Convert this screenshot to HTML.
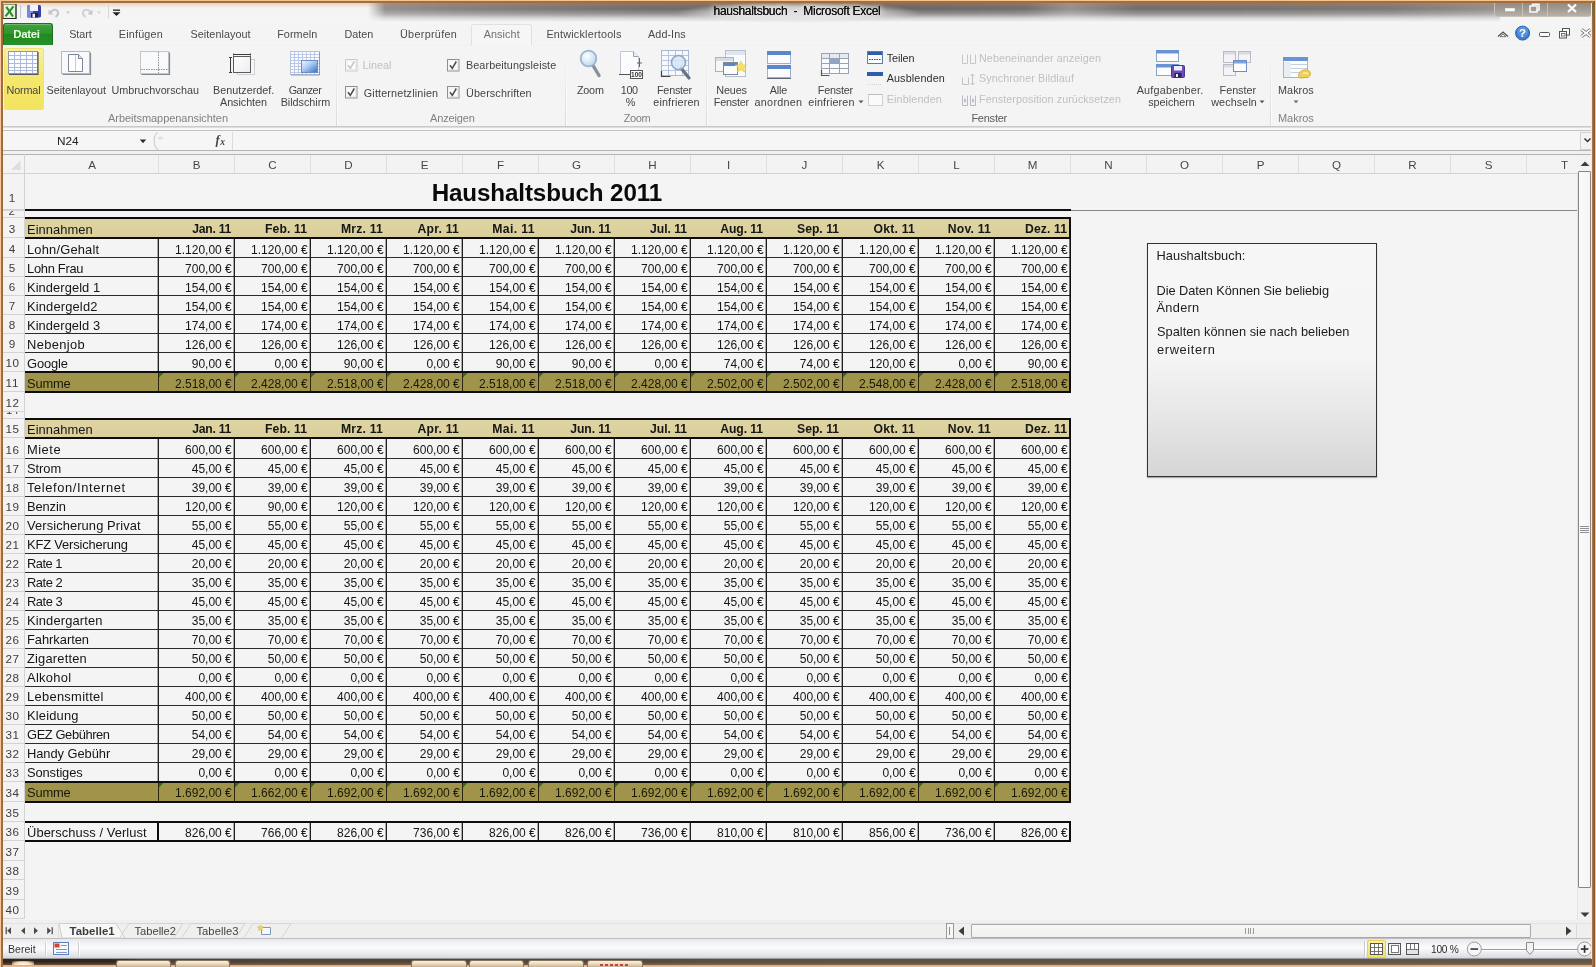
<!DOCTYPE html>
<html lang="de"><head><meta charset="utf-8"><title>haushaltsbuch - Microsoft Excel</title>
<style>
html,body{margin:0;padding:0}
body{width:1596px;height:967px;position:relative;overflow:hidden;background:#f4f4f4;font-family:"Liberation Sans",sans-serif;}
#app{left:0;top:0;width:1596px;height:967px;overflow:hidden;will-change:transform;transform:translateZ(0)}
div,span,svg{position:absolute;box-sizing:border-box}
span{white-space:pre;display:block}
</style></head>
<body>
<div id="app">
<div style="left:0px;top:0px;width:1596px;height:24px;background:linear-gradient(#f3f3f3,#f5f5f5)"></div>
<div style="left:368px;top:2px;width:1132px;height:20px;background:linear-gradient(to right,rgba(120,118,116,0) 0,rgba(135,133,131,.9) 1.500%,rgba(122,120,118,.92) 8%,rgba(100,98,96,.92) 25%,rgba(92,90,88,.92) 45%,rgba(98,96,94,.9) 58%,rgba(125,122,120,.8) 62%,rgba(98,96,94,.9) 68%,rgba(105,103,101,.88) 90%,rgba(125,121,117,.8) 100%);-webkit-mask-image:linear-gradient(#000 0,#000 35%,rgba(0,0,0,.7) 60%,rgba(0,0,0,.25) 80%,transparent 100%);mask-image:linear-gradient(#000 0,#000 35%,rgba(0,0,0,.7) 60%,rgba(0,0,0,.25) 80%,transparent 100%)"></div>
<div style="left:0px;top:2px;width:1596px;height:6px;background:linear-gradient(rgba(200,140,90,.35),rgba(200,140,90,0))"></div>
<div style="left:1494px;top:2px;width:98px;height:15px;background:linear-gradient(#8f8983,#a39c94 55%,#b9b1a8);border:1px solid #c9c2ba;border-top:0;border-radius:0 0 4px 4px"></div>
<div style="left:1522px;top:3px;width:1px;height:13px;background:#cfc8c0;opacity:.8"></div>
<div style="left:1547px;top:3px;width:1px;height:13px;background:#cfc8c0;opacity:.8"></div>
<svg style="left:1494px;top:2px" width="98" height="15" viewBox="0 0 98 15"><g fill="none" stroke="#fbfbfb" stroke-width="1.500"><rect x="11.500" y="6.500" width="9" height="2.500" fill="#fbfbfb" stroke-width=".6"/><rect x="36" y="4" width="7" height="6"/><path d="M38.500 4V2.200h6.500V8h-2"/><path d="M74 2.500l8 7.500M82 2.500l-8 7.500" stroke-width="2.300"/></g></svg>
<div style="left:676px;top:2px;width:244px;height:22px;background:radial-gradient(closest-side,rgba(235,235,235,.9) 0,rgba(232,232,232,.8) 55%,rgba(228,228,228,0) 100%)"></div>
<span style="left:713.50px;top:2.84px;font-size:12px;line-height:16px;color:#111;letter-spacing:-0.275px;text-shadow:0 0 .6px #111,0 0 6px #eee,0 0 6px #eee;">haushaltsbuch  -  Microsoft Excel</span>
<svg style="left:3px;top:4px" width="125" height="16" viewBox="0 0 125 16">
<rect x="0.500" y="0.500" width="12.500" height="14" fill="#e6f2dc" stroke="#8a9a80" stroke-width="1"/>
<path d="M13 0v14.500H0" fill="none" stroke="#2c2c2c" stroke-width="1.200"/>
<path d="M2.500 12.300L10.500 2.300M3.300 2.800l6.700 9.700" stroke="#2e8b2e" stroke-width="2.100" fill="none"/>
<rect x="17" y="1" width="1" height="13" fill="#b9c6cf"/>
<rect x="24" y="1" width="14" height="12.500" rx="1.500" fill="#3a3f9e"/>
<rect x="24" y="1" width="6" height="12.500" rx="1.500" fill="#8f98e6" opacity=".8"/>
<rect x="27" y="1" width="8" height="6" fill="#eef3ff"/>
<rect x="28" y="9" width="7" height="4.500" fill="#1d1f5e"/>
<rect x="29.500" y="9.800" width="2.500" height="3.700" fill="#f2f2f2"/>
<path d="M47 9.500c1.500-4.500 7-5 8-1.500c.6 2.500-.8 4-2.500 5" fill="none" stroke="#c6c6ca" stroke-width="2"/>
<path d="M45.500 5.500v5h5z" fill="#c6c6ca"/>
<path d="M63 7.500h4l-2 2.500z" fill="#c9c9cc"/>
<path d="M88 9.500c-1.500-4.500-7-5-8-1.500c-.6 2.500.8 4 2.500 5" fill="none" stroke="#d2d2d6" stroke-width="2"/>
<path d="M89.500 5.500v5h-5z" fill="#c6c6ca"/>
<path d="M94 7.500h4l-2 2.500z" fill="#d5d5d8"/>
<rect x="105" y="1" width="1" height="13" fill="#d7d7d7"/>
<rect x="110" y="5.500" width="7" height="1.300" fill="#222"/>
<path d="M109.500 8.200h8l-4 3.800z" fill="#222"/>
</svg>
<div style="left:3px;top:23px;width:50px;height:22px;background:linear-gradient(#3fa23f 0,#2c952c 45%,#1f8a1f 50%,#279027 100%);border:1px solid #1f701f;border-bottom:0;border-radius:3px 3px 0 0;box-shadow:inset 0 1px 0 rgba(255,255,255,.25)"></div>
<span style="left:13.20px;top:26.02px;font-size:11.5px;line-height:16px;font-weight:bold;color:#e8ffe0;letter-spacing:-0.324px;">Datei</span>
<div style="left:471px;top:24px;width:61px;height:22px;background:#f6f6f6;border:1px solid #e1e1e1;border-bottom:0;border-radius:3px 3px 0 0"></div>
<span style="left:69.20px;top:26.56px;font-size:10.8px;line-height:15px;color:#4a4a4a;letter-spacing:-0.062px;">Start</span>
<span style="left:118.80px;top:26.56px;font-size:10.8px;line-height:15px;color:#4a4a4a;letter-spacing:0.183px;">Einfügen</span>
<span style="left:190.50px;top:26.56px;font-size:10.8px;line-height:15px;color:#4a4a4a;letter-spacing:0.055px;">Seitenlayout</span>
<span style="left:277.20px;top:26.56px;font-size:10.8px;line-height:15px;color:#4a4a4a;letter-spacing:0.070px;">Formeln</span>
<span style="left:344.40px;top:26.56px;font-size:10.8px;line-height:15px;color:#4a4a4a;letter-spacing:0.036px;">Daten</span>
<span style="left:400.00px;top:26.56px;font-size:10.8px;line-height:15px;color:#4a4a4a;letter-spacing:0.307px;">Überprüfen</span>
<span style="left:483.70px;top:26.56px;font-size:10.8px;line-height:15px;color:#707070;letter-spacing:0.098px;">Ansicht</span>
<span style="left:546.40px;top:26.56px;font-size:10.8px;line-height:15px;color:#4a4a4a;letter-spacing:0.212px;">Entwicklertools</span>
<span style="left:648.10px;top:26.56px;font-size:10.8px;line-height:15px;color:#4a4a4a;letter-spacing:0.054px;">Add-Ins</span>
<div style="left:3px;top:45px;width:1590px;height:1px;background:#f0f0f0"></div>
<div style="left:472px;top:45px;width:59px;height:1px;background:#f6f6f6"></div>
<div style="left:3px;top:126px;width:1590px;height:1px;background:#c9c9c9"></div>
<div style="left:3px;top:127px;width:1590px;height:1px;background:#dedede"></div>
<div style="left:3px;top:128px;width:1590px;height:2px;background:#f8f8f8"></div>
<div style="left:3px;top:130px;width:1590px;height:1px;background:#c2c2c2"></div>
<svg style="left:1494px;top:24px" width="100" height="20" viewBox="0 0 100 20">
<path d="M4 12.500l5-4.500 5 4.500" fill="none" stroke="#555" stroke-width="1.300"/><path d="M6 12.700l3-2.700 3 2.700z" fill="#fff" stroke="#555" stroke-width=".8"/>
<circle cx="28.600" cy="9.100" r="7" fill="#3f7fd0" stroke="#2a5fa8" stroke-width="1"/><circle cx="28.600" cy="7.600" r="5.300" fill="#69a4ea" opacity=".55"/>
<text x="28.600" y="13.400" font-family="Liberation Sans, sans-serif" font-size="11.500" font-weight="bold" fill="#fff" text-anchor="middle">?</text>
<rect x="45.500" y="8.500" width="10" height="4" rx="1" fill="#fdfdfd" stroke="#555" stroke-width="1"/>
<rect x="68.500" y="4.500" width="7" height="6.500" fill="#fdfdfd" stroke="#555"/><rect x="65.500" y="7.500" width="7" height="6.500" fill="#fdfdfd" stroke="#555"/><rect x="67.500" y="9.500" width="3.500" height="2.500" fill="none" stroke="#555" stroke-width=".8"/>
<path d="M87.500 5.500l9 7M96.500 5.500l-9 7" stroke="#666" stroke-width="3.400" fill="none"/><path d="M87.500 5.500l9 7M96.500 5.500l-9 7" stroke="#fdfdfd" stroke-width="1.600" fill="none"/>
</svg>
<div style="left:4px;top:48px;width:40px;height:62px;background:linear-gradient(#f8f0a2 0,#f5e870 40%,#f3e45e 100%);border:1px solid #f1e07a;border-radius:2px"></div>
<svg style="left:8px;top:51px" width="31" height="25" viewBox="0 0 31 25">
<rect x=".5" y=".5" width="29" height="22" fill="#fcfdff" stroke="#8d96a8"/>
<g stroke="#a9b9e0" stroke-width="1"><path d="M1 4.500h28M1 8.500h28M1 12.500h28M1 16.500h28M1 19.500h28"/><path d="M6.500 1v21M12.500 1v21M18.500 1v21M24.500 1v21"/></g>
<path d="M30 1v22.500H1" fill="none" stroke="#55585f" stroke-width="1.200"/>
</svg>
<span style="left:6.50px;top:83.16px;font-size:10.8px;line-height:15px;color:#444;letter-spacing:-0.134px;">Normal</span>
<svg style="left:61px;top:51px" width="31" height="26" viewBox="0 0 31 26">
<rect x=".5" y=".5" width="28" height="22" fill="#f7f9fc" stroke="#b4bac4"/>
<path d="M29.500 1.500v22H1.500" fill="none" stroke="#8b8f97" stroke-width="1.200"/>
<path d="M7.500 3.500h10l4 4v13h-14z" fill="#fff" stroke="#7f8794"/>
<path d="M17.500 3.500v4h4" fill="#dfe4ee" stroke="#7f8794"/>
<path d="M14.500 4v16" stroke="#c4cbd8"/>
</svg>
<span style="left:46.50px;top:83.16px;font-size:10.8px;line-height:15px;color:#444;letter-spacing:0.005px;">Seitenlayout</span>
<svg style="left:140px;top:51px" width="31" height="26" viewBox="0 0 31 26">
<rect x=".5" y=".5" width="28" height="22" fill="#f8f9fb" stroke="#c3c6cc"/>
<path d="M29.500 1.500v22H1.500" fill="none" stroke="#85888f" stroke-width="1.200"/>
<path d="M18.500 1v21" stroke="#8f949c" stroke-dasharray="1.500 1"/><path d="M1 18.500h28" stroke="#8f949c" stroke-dasharray="1.500 1"/>
</svg>
<span style="left:111.50px;top:83.16px;font-size:10.8px;line-height:15px;color:#444;letter-spacing:-0.009px;">Umbruchvorschau</span>
<svg style="left:228px;top:51px" width="31" height="27" viewBox="0 0 31 27">
<defs><linearGradient id="gbd" x1="0" y1="0" x2="1" y2="1"><stop offset="0" stop-color="#fff"/><stop offset="1" stop-color="#ececee"/></linearGradient></defs>
<rect x="9.500" y="8.500" width="17" height="15" fill="#f6f6f7" stroke="#cfd0d4"/>
<rect x="5.500" y="5.500" width="17" height="16" fill="url(#gbd)" stroke="#5a5c62"/>
<path d="M5 3.500h18M5.500 2.500v2M22.500 2.500v2" stroke="#3c3c3c" fill="none"/>
<path d="M2.500 6.500v15M1 6.500h3M1 21.500h3" stroke="#3c3c3c" fill="none"/>
</svg>
<span style="left:213.00px;top:83.16px;font-size:10.8px;line-height:15px;color:#444;letter-spacing:0.013px;">Benutzerdef.</span>
<span style="left:220.00px;top:95.16px;font-size:10.8px;line-height:15px;color:#444;letter-spacing:-0.048px;">Ansichten</span>
<svg style="left:290px;top:51px" width="31" height="26" viewBox="0 0 31 26">
<rect x=".5" y=".5" width="29" height="23" fill="#f9fbfe" stroke="#b7c3da"/>
<g stroke="#b4c3e4" stroke-width=".9"><path d="M1 3.500h28M1 6.500h28M1 9.500h28M1 12.500h28M1 15.500h28M1 18.500h28M1 21.500h28M4.500 1v22M8.500 1v22M12.500 1v22M16.500 1v22M20.500 1v22M24.500 1v22"/></g>
<defs><linearGradient id="gb" x1="0" y1="0" x2="1" y2="1"><stop offset="0" stop-color="#f4f9ff"/><stop offset=".45" stop-color="#a9c9f2"/><stop offset="1" stop-color="#2f6fd0"/></linearGradient></defs>
<rect x="11.500" y="9.500" width="16" height="12" fill="url(#gb)" stroke="#6d8cc0"/>
<path d="M29.500 1v23H1" fill="none" stroke="#8f9bb2" stroke-width="1"/>
</svg>
<span style="left:288.70px;top:83.16px;font-size:10.8px;line-height:15px;color:#444;letter-spacing:-0.470px;">Ganzer</span>
<span style="left:280.70px;top:95.16px;font-size:10.8px;line-height:15px;color:#444;letter-spacing:-0.021px;">Bildschirm</span>
<span style="left:108.00px;top:111.09px;font-size:11px;line-height:15px;color:#808080;letter-spacing:-0.049px;">Arbeitsmappenansichten</span>
<div style="left:336px;top:48px;width:1px;height:78px;background:linear-gradient(rgba(225,225,225,0) 10%,#e6e6e6 60%,#d9d9d9)"></div>
<div style="left:337px;top:48px;width:1px;height:78px;background:linear-gradient(rgba(255,255,255,0) 10%,#fafafa 60%,#fcfcfc)"></div>
<svg style="left:345px;top:59px" width="13" height="13" viewBox="0 0 13 13"><rect x=".5" y=".5" width="11.500" height="11.500" fill="#fdfdfd" stroke="#c9c9c9"/><rect x="2" y="2" width="8.500" height="8.500" fill="none" stroke="#ebebeb"/><path d="M3 6.300l2.300 3 4-6.800" fill="none" stroke="#c4c4c4" stroke-width="1.500"/></svg>
<svg style="left:345px;top:86px" width="13" height="13" viewBox="0 0 13 13"><rect x=".5" y=".5" width="11.500" height="11.500" fill="#fdfdfd" stroke="#8e8f8f"/><rect x="2" y="2" width="8.500" height="8.500" fill="none" stroke="#ebebeb"/><path d="M3 6.300l2.300 3 4-6.800" fill="none" stroke="#4b4b4b" stroke-width="1.500"/></svg>
<svg style="left:447px;top:59px" width="13" height="13" viewBox="0 0 13 13"><rect x=".5" y=".5" width="11.500" height="11.500" fill="#fdfdfd" stroke="#8e8f8f"/><rect x="2" y="2" width="8.500" height="8.500" fill="none" stroke="#ebebeb"/><path d="M3 6.300l2.300 3 4-6.800" fill="none" stroke="#4b4b4b" stroke-width="1.500"/></svg>
<svg style="left:447px;top:86px" width="13" height="13" viewBox="0 0 13 13"><rect x=".5" y=".5" width="11.500" height="11.500" fill="#fdfdfd" stroke="#8e8f8f"/><rect x="2" y="2" width="8.500" height="8.500" fill="none" stroke="#ebebeb"/><path d="M3 6.300l2.300 3 4-6.800" fill="none" stroke="#4b4b4b" stroke-width="1.500"/></svg>
<span style="left:362.60px;top:57.76px;font-size:10.8px;line-height:15px;color:#c0c0c0;letter-spacing:-0.004px;">Lineal</span>
<span style="left:363.80px;top:85.66px;font-size:10.8px;line-height:15px;color:#444;letter-spacing:0.154px;">Gitternetzlinien</span>
<span style="left:466.00px;top:57.76px;font-size:10.8px;line-height:15px;color:#444;letter-spacing:0.080px;">Bearbeitungsleiste</span>
<span style="left:466.00px;top:85.66px;font-size:10.8px;line-height:15px;color:#444;letter-spacing:0.113px;">Überschriften</span>
<span style="left:430.00px;top:111.09px;font-size:11px;line-height:15px;color:#808080;letter-spacing:-0.159px;">Anzeigen</span>
<div style="left:565px;top:48px;width:1px;height:78px;background:linear-gradient(rgba(225,225,225,0) 10%,#e6e6e6 60%,#d9d9d9)"></div>
<div style="left:566px;top:48px;width:1px;height:78px;background:linear-gradient(rgba(255,255,255,0) 10%,#fafafa 60%,#fcfcfc)"></div>
<svg style="left:578px;top:49px" width="26" height="30" viewBox="0 0 26 30">
<defs><radialGradient id="gz" cx=".4" cy=".35" r=".7"><stop offset="0" stop-color="#fff"/><stop offset="1" stop-color="#b9d6f2"/></radialGradient></defs>
<path d="M14.500 15.500l6.500 11" stroke="#8c8f96" stroke-width="3.400" stroke-linecap="round"/>
<circle cx="10.500" cy="9.500" r="7.800" fill="url(#gz)" stroke="#9fb4cc" stroke-width="1.800"/>
</svg>
<span style="left:576.90px;top:83.16px;font-size:10.8px;line-height:15px;color:#444;letter-spacing:-0.202px;">Zoom</span>
<svg style="left:617px;top:50px" width="27" height="30" viewBox="0 0 27 30">
<path d="M3.500 1.500h13l5 5v18h-18z" fill="#fbfcfe" stroke="#c2c8d2"/>
<path d="M16.500 1.500v5h5" fill="#e9edf4" stroke="#9aa2b0"/>
<path d="M22.500 8v9M20 13h5" stroke="#666" stroke-width="1"/>
<path d="M2 24.500h12" stroke="#555" stroke-width="1"/>
<rect x="13.500" y="20.500" width="12" height="8" fill="#fff" stroke="#555"/>
<text x="19.500" y="27.300" font-family="Liberation Sans, sans-serif" font-size="6.500" font-weight="bold" fill="#333" text-anchor="middle">100</text>
</svg>
<span style="left:620.70px;top:83.16px;font-size:10.8px;line-height:15px;color:#444;letter-spacing:-0.307px;">100</span>
<span style="left:625.70px;top:95.16px;font-size:10.8px;line-height:15px;color:#444;">%</span>
<svg style="left:660px;top:49px" width="36" height="31" viewBox="0 0 36 31">
<rect x="1.500" y="1.500" width="27" height="25" fill="#f6f9fd" stroke="#a9b8d0"/>
<g stroke="#b5c4e2"><path d="M2 6.500h26M2 11.500h26M2 16.500h26M2 21.500h26M8.500 2v24M15.500 2v24M22.500 2v24"/></g>
<path d="M1.500 22v5.500h9" fill="none" stroke="#444" stroke-width="1.200"/>
<path d="M21 19l8 10" stroke="#6d7179" stroke-width="3.200" stroke-linecap="round"/>
<circle cx="18.500" cy="13.500" r="7" fill="#d6e8fa" fill-opacity=".85" stroke="#8fa6c2" stroke-width="1.600"/>
</svg>
<span style="left:657.00px;top:83.16px;font-size:10.8px;line-height:15px;color:#444;letter-spacing:-0.231px;">Fenster</span>
<span style="left:653.30px;top:95.16px;font-size:10.8px;line-height:15px;color:#444;letter-spacing:0.137px;">einfrieren</span>
<span style="left:623.70px;top:111.09px;font-size:11px;line-height:15px;color:#808080;letter-spacing:-0.380px;">Zoom</span>
<div style="left:706px;top:48px;width:1px;height:78px;background:linear-gradient(rgba(225,225,225,0) 10%,#e6e6e6 60%,#d9d9d9)"></div>
<div style="left:707px;top:48px;width:1px;height:78px;background:linear-gradient(rgba(255,255,255,0) 10%,#fafafa 60%,#fcfcfc)"></div>
<svg style="left:714px;top:49px" width="36" height="31" viewBox="0 0 36 31">
<rect x="11.500" y="1.500" width="20" height="26" fill="#fafbfd" stroke="#b8bec8"/><rect x="12" y="2" width="19" height="4" fill="#dfe6f2"/>
<rect x="1.500" y="8.500" width="18" height="14" fill="#f5f6f8" stroke="#aeb2ba"/><rect x="2" y="9" width="17" height="3" fill="#d9dde6"/>
<rect x="9.500" y="13.500" width="14" height="12" fill="#fbfcfe" stroke="#7c8798"/><rect x="10" y="14" width="13" height="3" fill="#5d86c6"/>
<path d="M27 12l1.800 3.800 4.200.4-3.200 2.800 1 4.100-3.800-2.200-3.800 2.200 1-4.100-3.200-2.800 4.200-.4z" fill="#f5e068" stroke="#e3c93a" stroke-width=".6"/>
</svg>
<span style="left:716.30px;top:83.16px;font-size:10.8px;line-height:15px;color:#444;letter-spacing:-0.124px;">Neues</span>
<span style="left:713.80px;top:95.16px;font-size:10.8px;line-height:15px;color:#444;letter-spacing:-0.216px;">Fenster</span>
<svg style="left:766px;top:50px" width="27" height="30" viewBox="0 0 27 30">
<rect x="1.500" y="1.500" width="23" height="12" fill="#fbfcfe" stroke="#9fb0cc"/><rect x="1" y="1" width="24" height="4" fill="#5b86cb"/>
<rect x="1.500" y="15.500" width="23" height="12" fill="#fbfcfe" stroke="#9fb0cc"/><rect x="1" y="15" width="24" height="4" fill="#5b86cb"/>
<path d="M1 28.500h24" stroke="#667" stroke-width="1"/>
</svg>
<span style="left:769.70px;top:83.16px;font-size:10.8px;line-height:15px;color:#444;letter-spacing:-0.177px;">Alle</span>
<span style="left:754.60px;top:95.16px;font-size:10.8px;line-height:15px;color:#444;letter-spacing:0.257px;">anordnen</span>
<svg style="left:820px;top:52px" width="31" height="26" viewBox="0 0 31 26">
<rect x="1.500" y="1.500" width="27" height="20" fill="#fbfcfe" stroke="#9aa3b2"/>
<rect x="2" y="2" width="26" height="4" fill="#e4e9f2"/>
<rect x="10" y="6" width="9" height="5" fill="#8fa6c6"/>
<g stroke="#9aa3b2"><path d="M2 6.500h26M2 11.500h26M2 16.500h26M9.500 2v19M19.500 2v19"/></g>
<path d="M1.500 18v5.500h8" fill="none" stroke="#555" stroke-width="1.200"/>
</svg>
<span style="left:817.80px;top:83.16px;font-size:10.8px;line-height:15px;color:#444;letter-spacing:-0.216px;">Fenster</span>
<span style="left:808.30px;top:95.16px;font-size:10.8px;line-height:15px;color:#444;letter-spacing:0.127px;">einfrieren</span>
<svg style="left:858px;top:100px" width="6" height="4"><path d="M.5 .5h5l-2.500 2.800z" fill="#555"/></svg>
<svg style="left:867px;top:51px" width="17" height="14" viewBox="0 0 17 14"><rect x=".5" y=".5" width="15" height="12" fill="#fbfcfe" stroke="#5b7db2"/><rect x="1" y="1" width="14" height="3" fill="#2f5ea8"/><path d="M2 8.500h12" stroke="#444" stroke-dasharray="1.500 1"/></svg>
<svg style="left:867px;top:72px" width="17" height="14" viewBox="0 0 17 14"><rect x=".5" y=".5" width="15" height="3" fill="#2f5ea8" stroke="#2f5ea8"/><path d="M1 12.500h14" stroke="#d4d4d4" stroke-dasharray="1 1"/></svg>
<svg style="left:867px;top:93px" width="17" height="14" viewBox="0 0 17 14"><rect x="1.500" y="1.500" width="14" height="11" fill="#fafafa" stroke="#d0d0d0"/><path d="M1 1.500h14" stroke="#bdbdbd"/></svg>
<span style="left:886.70px;top:50.76px;font-size:10.8px;line-height:15px;color:#2e2e2e;letter-spacing:-0.103px;">Teilen</span>
<span style="left:886.70px;top:71.46px;font-size:10.8px;line-height:15px;color:#2e2e2e;letter-spacing:0.115px;">Ausblenden</span>
<span style="left:886.70px;top:92.26px;font-size:10.8px;line-height:15px;color:#c0c0c0;letter-spacing:0.115px;">Einblenden</span>
<svg style="left:961px;top:52px" width="16" height="13" viewBox="0 0 16 13"><path d="M1.500 2.500v9h5v-9M9.500 2.500v9h5v-9" fill="none" stroke="#c6c6c6"/></svg>
<svg style="left:961px;top:73px" width="16" height="13" viewBox="0 0 16 13"><path d="M1.500 4.500v7h6v-7M11.500 1v11M9.500 3l2-2 2 2M9.500 10l2 2 2-2" fill="none" stroke="#c3c3c3"/></svg>
<svg style="left:961px;top:94px" width="16" height="13" viewBox="0 0 16 13"><path d="M1.500 1.500v10h5v-10M9.500 1.500v10h5v-10M3 6.500h2M11 6.500h2" fill="none" stroke="#b9b9c4"/><path d="M4 4.500v4M12 4.500v4" stroke="#9aa" /></svg>
<span style="left:979.00px;top:50.76px;font-size:10.8px;line-height:15px;color:#c0c0c0;letter-spacing:0.059px;">Nebeneinander anzeigen</span>
<span style="left:979.00px;top:71.46px;font-size:10.8px;line-height:15px;color:#c0c0c0;letter-spacing:0.071px;">Synchroner Bildlauf</span>
<span style="left:979.00px;top:92.26px;font-size:10.8px;line-height:15px;color:#c0c0c0;letter-spacing:0.055px;">Fensterposition zurücksetzen</span>
<svg style="left:1155px;top:49px" width="33" height="31" viewBox="0 0 33 31">
<rect x="1.500" y="1.500" width="22" height="11" fill="#fbfcfe" stroke="#8fa3c6"/><rect x="1" y="1" width="23" height="3.500" fill="#6a93d4"/>
<rect x="1.500" y="15.500" width="22" height="11" fill="#fbfcfe" stroke="#8fa3c6"/><rect x="1" y="15" width="23" height="3.500" fill="#6a93d4"/>
<rect x="16.500" y="16.500" width="13" height="12" rx="1" fill="#6a4fb0" stroke="#4a3590"/><rect x="19" y="17" width="8" height="4.500" fill="#efeaff"/><rect x="19.500" y="24" width="7" height="4.500" fill="#2c1f66"/><rect x="21" y="25" width="2" height="3" fill="#eee"/>
</svg>
<span style="left:1136.70px;top:83.16px;font-size:10.8px;line-height:15px;color:#444;letter-spacing:0.212px;">Aufgabenber.</span>
<span style="left:1148.20px;top:95.16px;font-size:10.8px;line-height:15px;color:#444;letter-spacing:-0.026px;">speichern</span>
<svg style="left:1223px;top:51px" width="30" height="27" viewBox="0 0 30 27">
<rect x=".5" y=".5" width="12" height="11" fill="#f4f4f6" stroke="#b9bcc4"/><rect x="1" y="1" width="11" height="2.500" fill="#d9dbe2"/>
<rect x="15.500" y=".5" width="12" height="11" fill="#f4f4f6" stroke="#b9bcc4"/><rect x="16" y="1" width="11" height="2.500" fill="#d9dbe2"/>
<rect x=".5" y="13.500" width="12" height="11" fill="#f4f4f6" stroke="#b9bcc4"/><rect x="1" y="14" width="11" height="2.500" fill="#d9dbe2"/>
<rect x="10.500" y="9.500" width="13" height="11" fill="#fdfdff" stroke="#6d8fc8"/><rect x="11" y="10" width="12" height="2.500" fill="#7fa2dc"/>
</svg>
<span style="left:1219.60px;top:83.16px;font-size:10.8px;line-height:15px;color:#444;letter-spacing:-0.031px;">Fenster</span>
<span style="left:1211.20px;top:95.16px;font-size:10.8px;line-height:15px;color:#444;letter-spacing:0.097px;">wechseln</span>
<svg style="left:1259px;top:100px" width="6" height="4"><path d="M.5 .5h5l-2.500 2.800z" fill="#555"/></svg>
<span style="left:971.40px;top:111.09px;font-size:11px;line-height:15px;color:#5a5a5a;letter-spacing:-0.242px;">Fenster</span>
<div style="left:1270px;top:48px;width:1px;height:78px;background:linear-gradient(rgba(225,225,225,0) 10%,#e6e6e6 60%,#d9d9d9)"></div>
<div style="left:1271px;top:48px;width:1px;height:78px;background:linear-gradient(rgba(255,255,255,0) 10%,#fafafa 60%,#fcfcfc)"></div>
<svg style="left:1282px;top:56px" width="31" height="27" viewBox="0 0 31 27">
<rect x="1.500" y="1.500" width="24" height="20" fill="#fbfcfe" stroke="#a9b4c6"/><rect x="1" y="1" width="25" height="4" fill="#6a93d4"/>
<g stroke="#c6cede"><path d="M2 8.500h23M2 12.500h23M2 16.500h23"/></g>
<rect x="2" y="6" width="7" height="15" fill="#e9edf4"/>
<path d="M18 16c3-3 8-3 10 0c1.500 3-1 6-4 5.500l-6 .5c-2-1-2-4 0-6z" fill="#f0cf5a" stroke="#c9a52e" stroke-width=".8"/>
<path d="M21 17.500c1.500-1 4-1 5 .5" fill="none" stroke="#fff6c8" stroke-width="1.200"/>
</svg>
<span style="left:1278.00px;top:83.16px;font-size:10.8px;line-height:15px;color:#444;letter-spacing:0.065px;">Makros</span>
<svg style="left:1293px;top:100px" width="6" height="4"><path d="M.5 .5h5l-2.500 2.800z" fill="#666"/></svg>
<span style="left:1278.00px;top:111.09px;font-size:11px;line-height:15px;color:#808080;letter-spacing:-0.044px;">Makros</span>
<div style="left:3px;top:131px;width:1590px;height:20px;background:#f6f6f6"></div>
<div style="left:3px;top:150px;width:1590px;height:1px;background:#b4b4b4"></div>
<div style="left:3px;top:151px;width:1590px;height:3px;background:#f0f0f0"></div>
<span style="left:57.00px;top:132.91px;font-size:11.8px;line-height:16px;color:#222;letter-spacing:0.018px;">N24</span>
<svg style="left:139px;top:139px" width="8" height="5"><path d="M.8 .6h6.400l-3.200 3.600z" fill="#2c2c2c"/></svg>
<svg style="left:150px;top:131px" width="14" height="20" viewBox="0 0 14 20"><path d="M8 1.500c-5 2-5 14 0 17" fill="none" stroke="#cfcfcf" stroke-width="1.200"/><ellipse cx="10.500" cy="7" rx="2.800" ry="1.600" fill="#e2e2e2"/></svg>
<span style="left:215.50px;top:131.77px;font-size:12.5px;line-height:17px;font-weight:bold;color:#444;font-family:'Liberation Serif',serif;font-style:italic;">f</span>
<span style="left:220.30px;top:136.21px;font-size:9.5px;line-height:13px;font-weight:bold;color:#444;font-family:'Liberation Serif',serif;font-style:italic;">x</span>
<div style="left:232px;top:132px;width:1px;height:18px;background:#dcdcdc"></div>
<div style="left:1580px;top:132px;width:13px;height:18px;background:#f3f3f3;border:1px solid #d0d0d0"></div>
<svg style="left:1583px;top:137px" width="9" height="7"><path d="M1.500 1.500l3 3 3-3" fill="none" stroke="#333" stroke-width="1.500"/></svg>
<div style="left:3px;top:154px;width:1590px;height:20px;background:#f3f3f3"></div>
<div style="left:3px;top:154px;width:1590px;height:1px;background:#b4b4b4"></div>
<div style="left:3px;top:173px;width:1575px;height:1px;background:#d3d3d3"></div>
<div style="left:3px;top:174px;width:22px;height:745px;background:#f3f3f3"></div>
<div style="left:24px;top:154px;width:1px;height:765px;background:#d3d3d3"></div>
<svg style="left:10px;top:160px" width="12" height="11"><path d="M10.500 .5v9.500H1z" fill="#dedede"/></svg>
<div style="left:158px;top:155px;width:1px;height:18px;background:#dfdfdf"></div>
<span style="left:88.13px;top:156.68px;font-size:11.6px;line-height:16px;color:#454545;">A</span>
<div style="left:234px;top:155px;width:1px;height:18px;background:#dfdfdf"></div>
<span style="left:192.63px;top:156.68px;font-size:11.6px;line-height:16px;color:#454545;">B</span>
<div style="left:310px;top:155px;width:1px;height:18px;background:#dfdfdf"></div>
<span style="left:268.31px;top:156.68px;font-size:11.6px;line-height:16px;color:#454545;">C</span>
<div style="left:386px;top:155px;width:1px;height:18px;background:#dfdfdf"></div>
<span style="left:344.31px;top:156.68px;font-size:11.6px;line-height:16px;color:#454545;">D</span>
<div style="left:462px;top:155px;width:1px;height:18px;background:#dfdfdf"></div>
<span style="left:420.63px;top:156.68px;font-size:11.6px;line-height:16px;color:#454545;">E</span>
<div style="left:538px;top:155px;width:1px;height:18px;background:#dfdfdf"></div>
<span style="left:496.96px;top:156.68px;font-size:11.6px;line-height:16px;color:#454545;">F</span>
<div style="left:614px;top:155px;width:1px;height:18px;background:#dfdfdf"></div>
<span style="left:571.99px;top:156.68px;font-size:11.6px;line-height:16px;color:#454545;">G</span>
<div style="left:690px;top:155px;width:1px;height:18px;background:#dfdfdf"></div>
<span style="left:648.31px;top:156.68px;font-size:11.6px;line-height:16px;color:#454545;">H</span>
<div style="left:766px;top:155px;width:1px;height:18px;background:#dfdfdf"></div>
<span style="left:726.89px;top:156.68px;font-size:11.6px;line-height:16px;color:#454545;">I</span>
<div style="left:842px;top:155px;width:1px;height:18px;background:#dfdfdf"></div>
<span style="left:801.60px;top:156.68px;font-size:11.6px;line-height:16px;color:#454545;">J</span>
<div style="left:918px;top:155px;width:1px;height:18px;background:#dfdfdf"></div>
<span style="left:876.63px;top:156.68px;font-size:11.6px;line-height:16px;color:#454545;">K</span>
<div style="left:994px;top:155px;width:1px;height:18px;background:#dfdfdf"></div>
<span style="left:953.27px;top:156.68px;font-size:11.6px;line-height:16px;color:#454545;">L</span>
<div style="left:1070px;top:155px;width:1px;height:18px;background:#dfdfdf"></div>
<span style="left:1027.67px;top:156.68px;font-size:11.6px;line-height:16px;color:#454545;">M</span>
<div style="left:1146px;top:155px;width:1px;height:18px;background:#dfdfdf"></div>
<span style="left:1104.31px;top:156.68px;font-size:11.6px;line-height:16px;color:#454545;">N</span>
<div style="left:1222px;top:155px;width:1px;height:18px;background:#dfdfdf"></div>
<span style="left:1179.99px;top:156.68px;font-size:11.6px;line-height:16px;color:#454545;">O</span>
<div style="left:1298px;top:155px;width:1px;height:18px;background:#dfdfdf"></div>
<span style="left:1256.63px;top:156.68px;font-size:11.6px;line-height:16px;color:#454545;">P</span>
<div style="left:1374px;top:155px;width:1px;height:18px;background:#dfdfdf"></div>
<span style="left:1331.99px;top:156.68px;font-size:11.6px;line-height:16px;color:#454545;">Q</span>
<div style="left:1450px;top:155px;width:1px;height:18px;background:#dfdfdf"></div>
<span style="left:1408.31px;top:156.68px;font-size:11.6px;line-height:16px;color:#454545;">R</span>
<div style="left:1526px;top:155px;width:1px;height:18px;background:#dfdfdf"></div>
<span style="left:1484.63px;top:156.68px;font-size:11.6px;line-height:16px;color:#454545;">S</span>
<div style="left:1602px;top:155px;width:1px;height:18px;background:#dfdfdf"></div>
<span style="left:1560.96px;top:156.68px;font-size:11.6px;line-height:16px;color:#454545;">T</span>
<div style="left:3px;top:209px;width:21px;height:1px;background:#d3d3d3"></div>
<div style="left:3px;top:237px;width:21px;height:1px;background:#d3d3d3"></div>
<div style="left:3px;top:257px;width:21px;height:1px;background:#d3d3d3"></div>
<div style="left:3px;top:276px;width:21px;height:1px;background:#d3d3d3"></div>
<div style="left:3px;top:295px;width:21px;height:1px;background:#d3d3d3"></div>
<div style="left:3px;top:314px;width:21px;height:1px;background:#d3d3d3"></div>
<div style="left:3px;top:333px;width:21px;height:1px;background:#d3d3d3"></div>
<div style="left:3px;top:352px;width:21px;height:1px;background:#d3d3d3"></div>
<div style="left:3px;top:371px;width:21px;height:1px;background:#d3d3d3"></div>
<div style="left:3px;top:391px;width:21px;height:1px;background:#d3d3d3"></div>
<div style="left:3px;top:411px;width:21px;height:1px;background:#d3d3d3"></div>
<div style="left:3px;top:437px;width:21px;height:1px;background:#d3d3d3"></div>
<div style="left:3px;top:458px;width:21px;height:1px;background:#d3d3d3"></div>
<div style="left:3px;top:477px;width:21px;height:1px;background:#d3d3d3"></div>
<div style="left:3px;top:496px;width:21px;height:1px;background:#d3d3d3"></div>
<div style="left:3px;top:515px;width:21px;height:1px;background:#d3d3d3"></div>
<div style="left:3px;top:534px;width:21px;height:1px;background:#d3d3d3"></div>
<div style="left:3px;top:553px;width:21px;height:1px;background:#d3d3d3"></div>
<div style="left:3px;top:572px;width:21px;height:1px;background:#d3d3d3"></div>
<div style="left:3px;top:591px;width:21px;height:1px;background:#d3d3d3"></div>
<div style="left:3px;top:610px;width:21px;height:1px;background:#d3d3d3"></div>
<div style="left:3px;top:629px;width:21px;height:1px;background:#d3d3d3"></div>
<div style="left:3px;top:648px;width:21px;height:1px;background:#d3d3d3"></div>
<div style="left:3px;top:667px;width:21px;height:1px;background:#d3d3d3"></div>
<div style="left:3px;top:686px;width:21px;height:1px;background:#d3d3d3"></div>
<div style="left:3px;top:705px;width:21px;height:1px;background:#d3d3d3"></div>
<div style="left:3px;top:724px;width:21px;height:1px;background:#d3d3d3"></div>
<div style="left:3px;top:743px;width:21px;height:1px;background:#d3d3d3"></div>
<div style="left:3px;top:762px;width:21px;height:1px;background:#d3d3d3"></div>
<div style="left:3px;top:781px;width:21px;height:1px;background:#d3d3d3"></div>
<div style="left:3px;top:801px;width:21px;height:1px;background:#d3d3d3"></div>
<div style="left:3px;top:821px;width:21px;height:1px;background:#d3d3d3"></div>
<div style="left:3px;top:840px;width:21px;height:1px;background:#d3d3d3"></div>
<div style="left:3px;top:860px;width:21px;height:1px;background:#d3d3d3"></div>
<div style="left:3px;top:879px;width:21px;height:1px;background:#d3d3d3"></div>
<div style="left:3px;top:899px;width:21px;height:1px;background:#d3d3d3"></div>
<div style="left:3px;top:918px;width:21px;height:1px;background:#d3d3d3"></div>
<span style="left:8.85px;top:189.75px;font-size:11.7px;line-height:16px;color:#3d3d3d;">1</span>
<span style="left:8.85px;top:221.35px;font-size:11.7px;line-height:16px;color:#3d3d3d;">3</span>
<span style="left:8.85px;top:241.35px;font-size:11.7px;line-height:16px;color:#3d3d3d;">4</span>
<span style="left:8.85px;top:260.35px;font-size:11.7px;line-height:16px;color:#3d3d3d;">5</span>
<span style="left:8.85px;top:279.35px;font-size:11.7px;line-height:16px;color:#3d3d3d;">6</span>
<span style="left:8.85px;top:298.35px;font-size:11.7px;line-height:16px;color:#3d3d3d;">7</span>
<span style="left:8.85px;top:317.35px;font-size:11.7px;line-height:16px;color:#3d3d3d;">8</span>
<span style="left:8.85px;top:336.35px;font-size:11.7px;line-height:16px;color:#3d3d3d;">9</span>
<span style="left:5.60px;top:355.35px;font-size:11.7px;line-height:16px;color:#3d3d3d;letter-spacing:0.393px;">10</span>
<span style="left:5.60px;top:375.35px;font-size:11.7px;line-height:16px;color:#3d3d3d;letter-spacing:0.827px;">11</span>
<span style="left:5.60px;top:395.35px;font-size:11.7px;line-height:16px;color:#3d3d3d;letter-spacing:0.393px;">12</span>
<span style="left:5.60px;top:421.35px;font-size:11.7px;line-height:16px;color:#3d3d3d;letter-spacing:0.393px;">15</span>
<span style="left:5.60px;top:442.35px;font-size:11.7px;line-height:16px;color:#3d3d3d;letter-spacing:0.393px;">16</span>
<span style="left:5.60px;top:461.35px;font-size:11.7px;line-height:16px;color:#3d3d3d;letter-spacing:0.393px;">17</span>
<span style="left:5.60px;top:480.35px;font-size:11.7px;line-height:16px;color:#3d3d3d;letter-spacing:0.393px;">18</span>
<span style="left:5.60px;top:499.35px;font-size:11.7px;line-height:16px;color:#3d3d3d;letter-spacing:0.393px;">19</span>
<span style="left:5.60px;top:518.35px;font-size:11.7px;line-height:16px;color:#3d3d3d;letter-spacing:0.393px;">20</span>
<span style="left:5.60px;top:537.35px;font-size:11.7px;line-height:16px;color:#3d3d3d;letter-spacing:0.393px;">21</span>
<span style="left:5.60px;top:556.35px;font-size:11.7px;line-height:16px;color:#3d3d3d;letter-spacing:0.393px;">22</span>
<span style="left:5.60px;top:575.35px;font-size:11.7px;line-height:16px;color:#3d3d3d;letter-spacing:0.393px;">23</span>
<span style="left:5.60px;top:594.35px;font-size:11.7px;line-height:16px;color:#3d3d3d;letter-spacing:0.393px;">24</span>
<span style="left:5.60px;top:613.35px;font-size:11.7px;line-height:16px;color:#3d3d3d;letter-spacing:0.393px;">25</span>
<span style="left:5.60px;top:632.35px;font-size:11.7px;line-height:16px;color:#3d3d3d;letter-spacing:0.393px;">26</span>
<span style="left:5.60px;top:651.35px;font-size:11.7px;line-height:16px;color:#3d3d3d;letter-spacing:0.393px;">27</span>
<span style="left:5.60px;top:670.35px;font-size:11.7px;line-height:16px;color:#3d3d3d;letter-spacing:0.393px;">28</span>
<span style="left:5.60px;top:689.35px;font-size:11.7px;line-height:16px;color:#3d3d3d;letter-spacing:0.393px;">29</span>
<span style="left:5.60px;top:708.35px;font-size:11.7px;line-height:16px;color:#3d3d3d;letter-spacing:0.393px;">30</span>
<span style="left:5.60px;top:727.35px;font-size:11.7px;line-height:16px;color:#3d3d3d;letter-spacing:0.393px;">31</span>
<span style="left:5.60px;top:746.35px;font-size:11.7px;line-height:16px;color:#3d3d3d;letter-spacing:0.393px;">32</span>
<span style="left:5.60px;top:765.35px;font-size:11.7px;line-height:16px;color:#3d3d3d;letter-spacing:0.393px;">33</span>
<span style="left:5.60px;top:785.35px;font-size:11.7px;line-height:16px;color:#3d3d3d;letter-spacing:0.393px;">34</span>
<span style="left:5.60px;top:805.35px;font-size:11.7px;line-height:16px;color:#3d3d3d;letter-spacing:0.393px;">35</span>
<span style="left:5.60px;top:824.35px;font-size:11.7px;line-height:16px;color:#3d3d3d;letter-spacing:0.393px;">36</span>
<span style="left:5.60px;top:844.35px;font-size:11.7px;line-height:16px;color:#3d3d3d;letter-spacing:0.393px;">37</span>
<span style="left:5.60px;top:863.35px;font-size:11.7px;line-height:16px;color:#3d3d3d;letter-spacing:0.393px;">38</span>
<span style="left:5.60px;top:883.35px;font-size:11.7px;line-height:16px;color:#3d3d3d;letter-spacing:0.393px;">39</span>
<span style="left:5.60px;top:902.35px;font-size:11.7px;line-height:16px;color:#3d3d3d;letter-spacing:0.393px;">40</span>
<div style="left:3px;top:211px;width:21px;height:6px;overflow:hidden"><span style="left:5.500px;top:-7.500px;font-size:11.400px;line-height:14px;color:#3d3d3d">2</span></div>
<div style="left:3px;top:210px;width:21px;height:1px;background:#d3d3d3"></div>
<div style="left:3px;top:217px;width:21px;height:1px;background:#d3d3d3"></div>
<div style="left:3px;top:412px;width:21px;height:5px;overflow:hidden"><span style="left:3px;top:-9px;font-size:11.400px;line-height:14px;color:#3d3d3d">14</span></div>
<div style="left:3px;top:418px;width:21px;height:1px;background:#d3d3d3"></div>
<span style="left:431.70px;top:177.01px;font-size:24.2px;line-height:31px;font-weight:bold;color:#0a0a0a;letter-spacing:-0.122px;">Haushaltsbuch 2011</span>
<div style="left:25px;top:209px;width:1046px;height:2px;background:#111"></div>
<div style="left:1071px;top:210px;width:507px;height:1px;background:#858585"></div>
<div style="left:25px;top:217px;width:1046px;height:22px;background:#0d0d0d"></div>
<div style="left:25px;top:219px;width:1044px;height:18px;background:linear-gradient(#ded4a2,#dbd09b)"></div>
<span style="left:27.00px;top:221.03px;font-size:12.9px;line-height:17px;color:#151515;letter-spacing:0.048px;">Einnahmen</span>
<span style="left:192.30px;top:221.27px;font-size:12.2px;line-height:17px;font-weight:bold;color:#151515;letter-spacing:-0.271px;">Jan. 11</span>
<span style="left:265.00px;top:221.27px;font-size:12.2px;line-height:17px;font-weight:bold;color:#151515;letter-spacing:0.105px;">Feb. 11</span>
<span style="left:341.00px;top:221.27px;font-size:12.2px;line-height:17px;font-weight:bold;color:#151515;letter-spacing:0.202px;">Mrz. 11</span>
<span style="left:417.50px;top:221.27px;font-size:12.2px;line-height:17px;font-weight:bold;color:#151515;letter-spacing:0.227px;">Apr. 11</span>
<span style="left:492.20px;top:221.27px;font-size:12.2px;line-height:17px;font-weight:bold;color:#151515;letter-spacing:0.412px;">Mai. 11</span>
<span style="left:570.30px;top:221.27px;font-size:12.2px;line-height:17px;font-weight:bold;color:#151515;letter-spacing:-0.081px;">Jun. 11</span>
<span style="left:650.10px;top:221.27px;font-size:12.2px;line-height:17px;font-weight:bold;color:#151515;letter-spacing:-0.043px;">Jul. 11</span>
<span style="left:720.20px;top:221.27px;font-size:12.2px;line-height:17px;font-weight:bold;color:#151515;letter-spacing:-0.070px;">Aug. 11</span>
<span style="left:797.00px;top:221.27px;font-size:12.2px;line-height:17px;font-weight:bold;color:#151515;letter-spacing:0.007px;">Sep. 11</span>
<span style="left:873.50px;top:221.27px;font-size:12.2px;line-height:17px;font-weight:bold;color:#151515;letter-spacing:0.227px;">Okt. 11</span>
<span style="left:947.70px;top:221.27px;font-size:12.2px;line-height:17px;font-weight:bold;color:#151515;letter-spacing:0.226px;">Nov. 11</span>
<span style="left:1025.00px;top:221.27px;font-size:12.2px;line-height:17px;font-weight:bold;color:#151515;letter-spacing:0.104px;">Dez. 11</span>
<span style="left:27.00px;top:240.83px;font-size:12.9px;line-height:17px;color:#151515;letter-spacing:0.183px;">Lohn/Gehalt</span>
<span style="left:175.08px;top:241.64px;font-size:12.0px;line-height:16px;color:#151515;">1.120,00 €</span>
<span style="left:251.08px;top:241.64px;font-size:12.0px;line-height:16px;color:#151515;">1.120,00 €</span>
<span style="left:327.08px;top:241.64px;font-size:12.0px;line-height:16px;color:#151515;">1.120,00 €</span>
<span style="left:403.08px;top:241.64px;font-size:12.0px;line-height:16px;color:#151515;">1.120,00 €</span>
<span style="left:479.08px;top:241.64px;font-size:12.0px;line-height:16px;color:#151515;">1.120,00 €</span>
<span style="left:555.08px;top:241.64px;font-size:12.0px;line-height:16px;color:#151515;">1.120,00 €</span>
<span style="left:631.08px;top:241.64px;font-size:12.0px;line-height:16px;color:#151515;">1.120,00 €</span>
<span style="left:707.08px;top:241.64px;font-size:12.0px;line-height:16px;color:#151515;">1.120,00 €</span>
<span style="left:783.08px;top:241.64px;font-size:12.0px;line-height:16px;color:#151515;">1.120,00 €</span>
<span style="left:859.08px;top:241.64px;font-size:12.0px;line-height:16px;color:#151515;">1.120,00 €</span>
<span style="left:935.08px;top:241.64px;font-size:12.0px;line-height:16px;color:#151515;">1.120,00 €</span>
<span style="left:1011.08px;top:241.64px;font-size:12.0px;line-height:16px;color:#151515;">1.120,00 €</span>
<span style="left:27.00px;top:259.83px;font-size:12.9px;line-height:17px;color:#151515;letter-spacing:-0.279px;">Lohn Frau</span>
<span style="left:185.09px;top:260.64px;font-size:12.0px;line-height:16px;color:#151515;">700,00 €</span>
<span style="left:261.09px;top:260.64px;font-size:12.0px;line-height:16px;color:#151515;">700,00 €</span>
<span style="left:337.09px;top:260.64px;font-size:12.0px;line-height:16px;color:#151515;">700,00 €</span>
<span style="left:413.09px;top:260.64px;font-size:12.0px;line-height:16px;color:#151515;">700,00 €</span>
<span style="left:489.09px;top:260.64px;font-size:12.0px;line-height:16px;color:#151515;">700,00 €</span>
<span style="left:565.09px;top:260.64px;font-size:12.0px;line-height:16px;color:#151515;">700,00 €</span>
<span style="left:641.09px;top:260.64px;font-size:12.0px;line-height:16px;color:#151515;">700,00 €</span>
<span style="left:717.09px;top:260.64px;font-size:12.0px;line-height:16px;color:#151515;">700,00 €</span>
<span style="left:793.09px;top:260.64px;font-size:12.0px;line-height:16px;color:#151515;">700,00 €</span>
<span style="left:869.09px;top:260.64px;font-size:12.0px;line-height:16px;color:#151515;">700,00 €</span>
<span style="left:945.09px;top:260.64px;font-size:12.0px;line-height:16px;color:#151515;">700,00 €</span>
<span style="left:1021.09px;top:260.64px;font-size:12.0px;line-height:16px;color:#151515;">700,00 €</span>
<span style="left:27.00px;top:278.83px;font-size:12.9px;line-height:17px;color:#151515;letter-spacing:0.072px;">Kindergeld 1</span>
<span style="left:185.09px;top:279.64px;font-size:12.0px;line-height:16px;color:#151515;">154,00 €</span>
<span style="left:261.09px;top:279.64px;font-size:12.0px;line-height:16px;color:#151515;">154,00 €</span>
<span style="left:337.09px;top:279.64px;font-size:12.0px;line-height:16px;color:#151515;">154,00 €</span>
<span style="left:413.09px;top:279.64px;font-size:12.0px;line-height:16px;color:#151515;">154,00 €</span>
<span style="left:489.09px;top:279.64px;font-size:12.0px;line-height:16px;color:#151515;">154,00 €</span>
<span style="left:565.09px;top:279.64px;font-size:12.0px;line-height:16px;color:#151515;">154,00 €</span>
<span style="left:641.09px;top:279.64px;font-size:12.0px;line-height:16px;color:#151515;">154,00 €</span>
<span style="left:717.09px;top:279.64px;font-size:12.0px;line-height:16px;color:#151515;">154,00 €</span>
<span style="left:793.09px;top:279.64px;font-size:12.0px;line-height:16px;color:#151515;">154,00 €</span>
<span style="left:869.09px;top:279.64px;font-size:12.0px;line-height:16px;color:#151515;">154,00 €</span>
<span style="left:945.09px;top:279.64px;font-size:12.0px;line-height:16px;color:#151515;">154,00 €</span>
<span style="left:1021.09px;top:279.64px;font-size:12.0px;line-height:16px;color:#151515;">154,00 €</span>
<span style="left:27.00px;top:297.83px;font-size:12.9px;line-height:17px;color:#151515;letter-spacing:0.159px;">Kindergeld2</span>
<span style="left:185.09px;top:298.64px;font-size:12.0px;line-height:16px;color:#151515;">154,00 €</span>
<span style="left:261.09px;top:298.64px;font-size:12.0px;line-height:16px;color:#151515;">154,00 €</span>
<span style="left:337.09px;top:298.64px;font-size:12.0px;line-height:16px;color:#151515;">154,00 €</span>
<span style="left:413.09px;top:298.64px;font-size:12.0px;line-height:16px;color:#151515;">154,00 €</span>
<span style="left:489.09px;top:298.64px;font-size:12.0px;line-height:16px;color:#151515;">154,00 €</span>
<span style="left:565.09px;top:298.64px;font-size:12.0px;line-height:16px;color:#151515;">154,00 €</span>
<span style="left:641.09px;top:298.64px;font-size:12.0px;line-height:16px;color:#151515;">154,00 €</span>
<span style="left:717.09px;top:298.64px;font-size:12.0px;line-height:16px;color:#151515;">154,00 €</span>
<span style="left:793.09px;top:298.64px;font-size:12.0px;line-height:16px;color:#151515;">154,00 €</span>
<span style="left:869.09px;top:298.64px;font-size:12.0px;line-height:16px;color:#151515;">154,00 €</span>
<span style="left:945.09px;top:298.64px;font-size:12.0px;line-height:16px;color:#151515;">154,00 €</span>
<span style="left:1021.09px;top:298.64px;font-size:12.0px;line-height:16px;color:#151515;">154,00 €</span>
<span style="left:27.00px;top:316.83px;font-size:12.9px;line-height:17px;color:#151515;letter-spacing:0.063px;">Kindergeld 3</span>
<span style="left:185.09px;top:317.64px;font-size:12.0px;line-height:16px;color:#151515;">174,00 €</span>
<span style="left:261.09px;top:317.64px;font-size:12.0px;line-height:16px;color:#151515;">174,00 €</span>
<span style="left:337.09px;top:317.64px;font-size:12.0px;line-height:16px;color:#151515;">174,00 €</span>
<span style="left:413.09px;top:317.64px;font-size:12.0px;line-height:16px;color:#151515;">174,00 €</span>
<span style="left:489.09px;top:317.64px;font-size:12.0px;line-height:16px;color:#151515;">174,00 €</span>
<span style="left:565.09px;top:317.64px;font-size:12.0px;line-height:16px;color:#151515;">174,00 €</span>
<span style="left:641.09px;top:317.64px;font-size:12.0px;line-height:16px;color:#151515;">174,00 €</span>
<span style="left:717.09px;top:317.64px;font-size:12.0px;line-height:16px;color:#151515;">174,00 €</span>
<span style="left:793.09px;top:317.64px;font-size:12.0px;line-height:16px;color:#151515;">174,00 €</span>
<span style="left:869.09px;top:317.64px;font-size:12.0px;line-height:16px;color:#151515;">174,00 €</span>
<span style="left:945.09px;top:317.64px;font-size:12.0px;line-height:16px;color:#151515;">174,00 €</span>
<span style="left:1021.09px;top:317.64px;font-size:12.0px;line-height:16px;color:#151515;">174,00 €</span>
<span style="left:27.00px;top:335.83px;font-size:12.9px;line-height:17px;color:#151515;letter-spacing:0.359px;">Nebenjob</span>
<span style="left:185.09px;top:336.64px;font-size:12.0px;line-height:16px;color:#151515;">126,00 €</span>
<span style="left:261.09px;top:336.64px;font-size:12.0px;line-height:16px;color:#151515;">126,00 €</span>
<span style="left:337.09px;top:336.64px;font-size:12.0px;line-height:16px;color:#151515;">126,00 €</span>
<span style="left:413.09px;top:336.64px;font-size:12.0px;line-height:16px;color:#151515;">126,00 €</span>
<span style="left:489.09px;top:336.64px;font-size:12.0px;line-height:16px;color:#151515;">126,00 €</span>
<span style="left:565.09px;top:336.64px;font-size:12.0px;line-height:16px;color:#151515;">126,00 €</span>
<span style="left:641.09px;top:336.64px;font-size:12.0px;line-height:16px;color:#151515;">126,00 €</span>
<span style="left:717.09px;top:336.64px;font-size:12.0px;line-height:16px;color:#151515;">126,00 €</span>
<span style="left:793.09px;top:336.64px;font-size:12.0px;line-height:16px;color:#151515;">126,00 €</span>
<span style="left:869.09px;top:336.64px;font-size:12.0px;line-height:16px;color:#151515;">126,00 €</span>
<span style="left:945.09px;top:336.64px;font-size:12.0px;line-height:16px;color:#151515;">126,00 €</span>
<span style="left:1021.09px;top:336.64px;font-size:12.0px;line-height:16px;color:#151515;">126,00 €</span>
<span style="left:27.00px;top:354.83px;font-size:12.9px;line-height:17px;color:#151515;letter-spacing:-0.133px;">Google</span>
<span style="left:191.76px;top:355.64px;font-size:12.0px;line-height:16px;color:#151515;">90,00 €</span>
<span style="left:274.44px;top:355.64px;font-size:12.0px;line-height:16px;color:#151515;">0,00 €</span>
<span style="left:343.76px;top:355.64px;font-size:12.0px;line-height:16px;color:#151515;">90,00 €</span>
<span style="left:426.44px;top:355.64px;font-size:12.0px;line-height:16px;color:#151515;">0,00 €</span>
<span style="left:495.76px;top:355.64px;font-size:12.0px;line-height:16px;color:#151515;">90,00 €</span>
<span style="left:571.76px;top:355.64px;font-size:12.0px;line-height:16px;color:#151515;">90,00 €</span>
<span style="left:654.44px;top:355.64px;font-size:12.0px;line-height:16px;color:#151515;">0,00 €</span>
<span style="left:723.76px;top:355.64px;font-size:12.0px;line-height:16px;color:#151515;">74,00 €</span>
<span style="left:799.76px;top:355.64px;font-size:12.0px;line-height:16px;color:#151515;">74,00 €</span>
<span style="left:869.09px;top:355.64px;font-size:12.0px;line-height:16px;color:#151515;">120,00 €</span>
<span style="left:958.44px;top:355.64px;font-size:12.0px;line-height:16px;color:#151515;">0,00 €</span>
<span style="left:1027.76px;top:355.64px;font-size:12.0px;line-height:16px;color:#151515;">90,00 €</span>
<div style="left:25px;top:257px;width:1045px;height:1px;background:#2b2b2b"></div>
<div style="left:25px;top:276px;width:1045px;height:1px;background:#2b2b2b"></div>
<div style="left:25px;top:295px;width:1045px;height:1px;background:#2b2b2b"></div>
<div style="left:25px;top:314px;width:1045px;height:1px;background:#2b2b2b"></div>
<div style="left:25px;top:333px;width:1045px;height:1px;background:#2b2b2b"></div>
<div style="left:25px;top:352px;width:1045px;height:1px;background:#2b2b2b"></div>
<div style="left:158px;top:239px;width:1px;height:132px;background:#1f1f1f"></div>
<div style="left:157px;top:239px;width:1px;height:132px;background:rgba(0,0,0,.3)"></div>
<div style="left:234px;top:239px;width:1px;height:132px;background:#1f1f1f"></div>
<div style="left:233px;top:239px;width:1px;height:132px;background:rgba(0,0,0,.3)"></div>
<div style="left:310px;top:239px;width:1px;height:132px;background:#1f1f1f"></div>
<div style="left:309px;top:239px;width:1px;height:132px;background:rgba(0,0,0,.3)"></div>
<div style="left:386px;top:239px;width:1px;height:132px;background:#1f1f1f"></div>
<div style="left:385px;top:239px;width:1px;height:132px;background:rgba(0,0,0,.3)"></div>
<div style="left:462px;top:239px;width:1px;height:132px;background:#1f1f1f"></div>
<div style="left:461px;top:239px;width:1px;height:132px;background:rgba(0,0,0,.3)"></div>
<div style="left:538px;top:239px;width:1px;height:132px;background:#1f1f1f"></div>
<div style="left:537px;top:239px;width:1px;height:132px;background:rgba(0,0,0,.3)"></div>
<div style="left:614px;top:239px;width:1px;height:132px;background:#1f1f1f"></div>
<div style="left:613px;top:239px;width:1px;height:132px;background:rgba(0,0,0,.3)"></div>
<div style="left:690px;top:239px;width:1px;height:132px;background:#1f1f1f"></div>
<div style="left:689px;top:239px;width:1px;height:132px;background:rgba(0,0,0,.3)"></div>
<div style="left:766px;top:239px;width:1px;height:132px;background:#1f1f1f"></div>
<div style="left:765px;top:239px;width:1px;height:132px;background:rgba(0,0,0,.3)"></div>
<div style="left:842px;top:239px;width:1px;height:132px;background:#1f1f1f"></div>
<div style="left:841px;top:239px;width:1px;height:132px;background:rgba(0,0,0,.3)"></div>
<div style="left:918px;top:239px;width:1px;height:132px;background:#1f1f1f"></div>
<div style="left:917px;top:239px;width:1px;height:132px;background:rgba(0,0,0,.3)"></div>
<div style="left:994px;top:239px;width:1px;height:132px;background:#1f1f1f"></div>
<div style="left:993px;top:239px;width:1px;height:132px;background:rgba(0,0,0,.3)"></div>
<div style="left:1069px;top:239px;width:2px;height:132px;background:linear-gradient(to right,rgba(13,13,13,.6) 0,rgba(13,13,13,.6) 1px,#0d0d0d 1px)"></div>
<div style="left:25px;top:371px;width:1046px;height:22px;background:#0d0d0d"></div>
<div style="left:25px;top:373px;width:1044px;height:18px;background:#a0944b"></div>
<span style="left:27.00px;top:374.73px;font-size:12.9px;line-height:17px;color:#1a1708;letter-spacing:-0.189px;">Summe</span>
<div style="left:158px;top:373px;width:1px;height:18px;background:#2a2610"></div>
<svg style="left:159px;top:373px" width="5" height="5"><path d="M0 0h4.500L0 4.500z" fill="#2f6a2f"/></svg>
<span style="left:175.08px;top:375.54px;font-size:12.0px;line-height:16px;color:#1a1708;">2.518,00 €</span>
<div style="left:234px;top:373px;width:1px;height:18px;background:#2a2610"></div>
<svg style="left:235px;top:373px" width="5" height="5"><path d="M0 0h4.500L0 4.500z" fill="#2f6a2f"/></svg>
<span style="left:251.08px;top:375.54px;font-size:12.0px;line-height:16px;color:#1a1708;">2.428,00 €</span>
<div style="left:310px;top:373px;width:1px;height:18px;background:#2a2610"></div>
<svg style="left:311px;top:373px" width="5" height="5"><path d="M0 0h4.500L0 4.500z" fill="#2f6a2f"/></svg>
<span style="left:327.08px;top:375.54px;font-size:12.0px;line-height:16px;color:#1a1708;">2.518,00 €</span>
<div style="left:386px;top:373px;width:1px;height:18px;background:#2a2610"></div>
<svg style="left:387px;top:373px" width="5" height="5"><path d="M0 0h4.500L0 4.500z" fill="#2f6a2f"/></svg>
<span style="left:403.08px;top:375.54px;font-size:12.0px;line-height:16px;color:#1a1708;">2.428,00 €</span>
<div style="left:462px;top:373px;width:1px;height:18px;background:#2a2610"></div>
<svg style="left:463px;top:373px" width="5" height="5"><path d="M0 0h4.500L0 4.500z" fill="#2f6a2f"/></svg>
<span style="left:479.08px;top:375.54px;font-size:12.0px;line-height:16px;color:#1a1708;">2.518,00 €</span>
<div style="left:538px;top:373px;width:1px;height:18px;background:#2a2610"></div>
<svg style="left:539px;top:373px" width="5" height="5"><path d="M0 0h4.500L0 4.500z" fill="#2f6a2f"/></svg>
<span style="left:555.08px;top:375.54px;font-size:12.0px;line-height:16px;color:#1a1708;">2.518,00 €</span>
<div style="left:614px;top:373px;width:1px;height:18px;background:#2a2610"></div>
<svg style="left:615px;top:373px" width="5" height="5"><path d="M0 0h4.500L0 4.500z" fill="#2f6a2f"/></svg>
<span style="left:631.08px;top:375.54px;font-size:12.0px;line-height:16px;color:#1a1708;">2.428,00 €</span>
<div style="left:690px;top:373px;width:1px;height:18px;background:#2a2610"></div>
<svg style="left:691px;top:373px" width="5" height="5"><path d="M0 0h4.500L0 4.500z" fill="#2f6a2f"/></svg>
<span style="left:707.08px;top:375.54px;font-size:12.0px;line-height:16px;color:#1a1708;">2.502,00 €</span>
<div style="left:766px;top:373px;width:1px;height:18px;background:#2a2610"></div>
<svg style="left:767px;top:373px" width="5" height="5"><path d="M0 0h4.500L0 4.500z" fill="#2f6a2f"/></svg>
<span style="left:783.08px;top:375.54px;font-size:12.0px;line-height:16px;color:#1a1708;">2.502,00 €</span>
<div style="left:842px;top:373px;width:1px;height:18px;background:#2a2610"></div>
<svg style="left:843px;top:373px" width="5" height="5"><path d="M0 0h4.500L0 4.500z" fill="#2f6a2f"/></svg>
<span style="left:859.08px;top:375.54px;font-size:12.0px;line-height:16px;color:#1a1708;">2.548,00 €</span>
<div style="left:918px;top:373px;width:1px;height:18px;background:#2a2610"></div>
<svg style="left:919px;top:373px" width="5" height="5"><path d="M0 0h4.500L0 4.500z" fill="#2f6a2f"/></svg>
<span style="left:935.08px;top:375.54px;font-size:12.0px;line-height:16px;color:#1a1708;">2.428,00 €</span>
<div style="left:994px;top:373px;width:1px;height:18px;background:#2a2610"></div>
<svg style="left:995px;top:373px" width="5" height="5"><path d="M0 0h4.500L0 4.500z" fill="#2f6a2f"/></svg>
<span style="left:1011.08px;top:375.54px;font-size:12.0px;line-height:16px;color:#1a1708;">2.518,00 €</span>
<div style="left:25px;top:418px;width:1046px;height:21px;background:#0d0d0d"></div>
<div style="left:25px;top:420px;width:1044px;height:17px;background:linear-gradient(#ded4a2,#dbd09b)"></div>
<span style="left:27.00px;top:421.03px;font-size:12.9px;line-height:17px;color:#151515;letter-spacing:0.048px;">Einnahmen</span>
<span style="left:192.30px;top:421.27px;font-size:12.2px;line-height:17px;font-weight:bold;color:#151515;letter-spacing:-0.271px;">Jan. 11</span>
<span style="left:265.00px;top:421.27px;font-size:12.2px;line-height:17px;font-weight:bold;color:#151515;letter-spacing:0.105px;">Feb. 11</span>
<span style="left:341.00px;top:421.27px;font-size:12.2px;line-height:17px;font-weight:bold;color:#151515;letter-spacing:0.202px;">Mrz. 11</span>
<span style="left:417.50px;top:421.27px;font-size:12.2px;line-height:17px;font-weight:bold;color:#151515;letter-spacing:0.227px;">Apr. 11</span>
<span style="left:492.20px;top:421.27px;font-size:12.2px;line-height:17px;font-weight:bold;color:#151515;letter-spacing:0.412px;">Mai. 11</span>
<span style="left:570.30px;top:421.27px;font-size:12.2px;line-height:17px;font-weight:bold;color:#151515;letter-spacing:-0.081px;">Jun. 11</span>
<span style="left:650.10px;top:421.27px;font-size:12.2px;line-height:17px;font-weight:bold;color:#151515;letter-spacing:-0.043px;">Jul. 11</span>
<span style="left:720.20px;top:421.27px;font-size:12.2px;line-height:17px;font-weight:bold;color:#151515;letter-spacing:-0.070px;">Aug. 11</span>
<span style="left:797.00px;top:421.27px;font-size:12.2px;line-height:17px;font-weight:bold;color:#151515;letter-spacing:0.007px;">Sep. 11</span>
<span style="left:873.50px;top:421.27px;font-size:12.2px;line-height:17px;font-weight:bold;color:#151515;letter-spacing:0.227px;">Okt. 11</span>
<span style="left:947.70px;top:421.27px;font-size:12.2px;line-height:17px;font-weight:bold;color:#151515;letter-spacing:0.226px;">Nov. 11</span>
<span style="left:1025.00px;top:421.27px;font-size:12.2px;line-height:17px;font-weight:bold;color:#151515;letter-spacing:0.104px;">Dez. 11</span>
<span style="left:27.00px;top:441.13px;font-size:12.9px;line-height:17px;color:#151515;letter-spacing:0.511px;">Miete</span>
<span style="left:185.09px;top:441.94px;font-size:12.0px;line-height:16px;color:#151515;">600,00 €</span>
<span style="left:261.09px;top:441.94px;font-size:12.0px;line-height:16px;color:#151515;">600,00 €</span>
<span style="left:337.09px;top:441.94px;font-size:12.0px;line-height:16px;color:#151515;">600,00 €</span>
<span style="left:413.09px;top:441.94px;font-size:12.0px;line-height:16px;color:#151515;">600,00 €</span>
<span style="left:489.09px;top:441.94px;font-size:12.0px;line-height:16px;color:#151515;">600,00 €</span>
<span style="left:565.09px;top:441.94px;font-size:12.0px;line-height:16px;color:#151515;">600,00 €</span>
<span style="left:641.09px;top:441.94px;font-size:12.0px;line-height:16px;color:#151515;">600,00 €</span>
<span style="left:717.09px;top:441.94px;font-size:12.0px;line-height:16px;color:#151515;">600,00 €</span>
<span style="left:793.09px;top:441.94px;font-size:12.0px;line-height:16px;color:#151515;">600,00 €</span>
<span style="left:869.09px;top:441.94px;font-size:12.0px;line-height:16px;color:#151515;">600,00 €</span>
<span style="left:945.09px;top:441.94px;font-size:12.0px;line-height:16px;color:#151515;">600,00 €</span>
<span style="left:1021.09px;top:441.94px;font-size:12.0px;line-height:16px;color:#151515;">600,00 €</span>
<span style="left:27.00px;top:460.13px;font-size:12.9px;line-height:17px;color:#151515;letter-spacing:-0.061px;">Strom</span>
<span style="left:191.76px;top:460.94px;font-size:12.0px;line-height:16px;color:#151515;">45,00 €</span>
<span style="left:267.76px;top:460.94px;font-size:12.0px;line-height:16px;color:#151515;">45,00 €</span>
<span style="left:343.76px;top:460.94px;font-size:12.0px;line-height:16px;color:#151515;">45,00 €</span>
<span style="left:419.76px;top:460.94px;font-size:12.0px;line-height:16px;color:#151515;">45,00 €</span>
<span style="left:495.76px;top:460.94px;font-size:12.0px;line-height:16px;color:#151515;">45,00 €</span>
<span style="left:571.76px;top:460.94px;font-size:12.0px;line-height:16px;color:#151515;">45,00 €</span>
<span style="left:647.76px;top:460.94px;font-size:12.0px;line-height:16px;color:#151515;">45,00 €</span>
<span style="left:723.76px;top:460.94px;font-size:12.0px;line-height:16px;color:#151515;">45,00 €</span>
<span style="left:799.76px;top:460.94px;font-size:12.0px;line-height:16px;color:#151515;">45,00 €</span>
<span style="left:875.76px;top:460.94px;font-size:12.0px;line-height:16px;color:#151515;">45,00 €</span>
<span style="left:951.76px;top:460.94px;font-size:12.0px;line-height:16px;color:#151515;">45,00 €</span>
<span style="left:1027.76px;top:460.94px;font-size:12.0px;line-height:16px;color:#151515;">45,00 €</span>
<span style="left:27.00px;top:479.13px;font-size:12.9px;line-height:17px;color:#151515;letter-spacing:0.611px;">Telefon/Internet</span>
<span style="left:191.76px;top:479.94px;font-size:12.0px;line-height:16px;color:#151515;">39,00 €</span>
<span style="left:267.76px;top:479.94px;font-size:12.0px;line-height:16px;color:#151515;">39,00 €</span>
<span style="left:343.76px;top:479.94px;font-size:12.0px;line-height:16px;color:#151515;">39,00 €</span>
<span style="left:419.76px;top:479.94px;font-size:12.0px;line-height:16px;color:#151515;">39,00 €</span>
<span style="left:495.76px;top:479.94px;font-size:12.0px;line-height:16px;color:#151515;">39,00 €</span>
<span style="left:571.76px;top:479.94px;font-size:12.0px;line-height:16px;color:#151515;">39,00 €</span>
<span style="left:647.76px;top:479.94px;font-size:12.0px;line-height:16px;color:#151515;">39,00 €</span>
<span style="left:723.76px;top:479.94px;font-size:12.0px;line-height:16px;color:#151515;">39,00 €</span>
<span style="left:799.76px;top:479.94px;font-size:12.0px;line-height:16px;color:#151515;">39,00 €</span>
<span style="left:875.76px;top:479.94px;font-size:12.0px;line-height:16px;color:#151515;">39,00 €</span>
<span style="left:951.76px;top:479.94px;font-size:12.0px;line-height:16px;color:#151515;">39,00 €</span>
<span style="left:1027.76px;top:479.94px;font-size:12.0px;line-height:16px;color:#151515;">39,00 €</span>
<span style="left:27.00px;top:498.13px;font-size:12.9px;line-height:17px;color:#151515;letter-spacing:-0.107px;">Benzin</span>
<span style="left:185.09px;top:498.94px;font-size:12.0px;line-height:16px;color:#151515;">120,00 €</span>
<span style="left:267.76px;top:498.94px;font-size:12.0px;line-height:16px;color:#151515;">90,00 €</span>
<span style="left:337.09px;top:498.94px;font-size:12.0px;line-height:16px;color:#151515;">120,00 €</span>
<span style="left:413.09px;top:498.94px;font-size:12.0px;line-height:16px;color:#151515;">120,00 €</span>
<span style="left:489.09px;top:498.94px;font-size:12.0px;line-height:16px;color:#151515;">120,00 €</span>
<span style="left:565.09px;top:498.94px;font-size:12.0px;line-height:16px;color:#151515;">120,00 €</span>
<span style="left:641.09px;top:498.94px;font-size:12.0px;line-height:16px;color:#151515;">120,00 €</span>
<span style="left:717.09px;top:498.94px;font-size:12.0px;line-height:16px;color:#151515;">120,00 €</span>
<span style="left:793.09px;top:498.94px;font-size:12.0px;line-height:16px;color:#151515;">120,00 €</span>
<span style="left:869.09px;top:498.94px;font-size:12.0px;line-height:16px;color:#151515;">120,00 €</span>
<span style="left:945.09px;top:498.94px;font-size:12.0px;line-height:16px;color:#151515;">120,00 €</span>
<span style="left:1021.09px;top:498.94px;font-size:12.0px;line-height:16px;color:#151515;">120,00 €</span>
<span style="left:27.00px;top:517.13px;font-size:12.9px;line-height:17px;color:#151515;letter-spacing:0.097px;">Versicherung Privat</span>
<span style="left:191.76px;top:517.94px;font-size:12.0px;line-height:16px;color:#151515;">55,00 €</span>
<span style="left:267.76px;top:517.94px;font-size:12.0px;line-height:16px;color:#151515;">55,00 €</span>
<span style="left:343.76px;top:517.94px;font-size:12.0px;line-height:16px;color:#151515;">55,00 €</span>
<span style="left:419.76px;top:517.94px;font-size:12.0px;line-height:16px;color:#151515;">55,00 €</span>
<span style="left:495.76px;top:517.94px;font-size:12.0px;line-height:16px;color:#151515;">55,00 €</span>
<span style="left:571.76px;top:517.94px;font-size:12.0px;line-height:16px;color:#151515;">55,00 €</span>
<span style="left:647.76px;top:517.94px;font-size:12.0px;line-height:16px;color:#151515;">55,00 €</span>
<span style="left:723.76px;top:517.94px;font-size:12.0px;line-height:16px;color:#151515;">55,00 €</span>
<span style="left:799.76px;top:517.94px;font-size:12.0px;line-height:16px;color:#151515;">55,00 €</span>
<span style="left:875.76px;top:517.94px;font-size:12.0px;line-height:16px;color:#151515;">55,00 €</span>
<span style="left:951.76px;top:517.94px;font-size:12.0px;line-height:16px;color:#151515;">55,00 €</span>
<span style="left:1027.76px;top:517.94px;font-size:12.0px;line-height:16px;color:#151515;">55,00 €</span>
<span style="left:27.00px;top:536.13px;font-size:12.9px;line-height:17px;color:#151515;letter-spacing:-0.153px;">KFZ Versicherung</span>
<span style="left:191.76px;top:536.94px;font-size:12.0px;line-height:16px;color:#151515;">45,00 €</span>
<span style="left:267.76px;top:536.94px;font-size:12.0px;line-height:16px;color:#151515;">45,00 €</span>
<span style="left:343.76px;top:536.94px;font-size:12.0px;line-height:16px;color:#151515;">45,00 €</span>
<span style="left:419.76px;top:536.94px;font-size:12.0px;line-height:16px;color:#151515;">45,00 €</span>
<span style="left:495.76px;top:536.94px;font-size:12.0px;line-height:16px;color:#151515;">45,00 €</span>
<span style="left:571.76px;top:536.94px;font-size:12.0px;line-height:16px;color:#151515;">45,00 €</span>
<span style="left:647.76px;top:536.94px;font-size:12.0px;line-height:16px;color:#151515;">45,00 €</span>
<span style="left:723.76px;top:536.94px;font-size:12.0px;line-height:16px;color:#151515;">45,00 €</span>
<span style="left:799.76px;top:536.94px;font-size:12.0px;line-height:16px;color:#151515;">45,00 €</span>
<span style="left:875.76px;top:536.94px;font-size:12.0px;line-height:16px;color:#151515;">45,00 €</span>
<span style="left:951.76px;top:536.94px;font-size:12.0px;line-height:16px;color:#151515;">45,00 €</span>
<span style="left:1027.76px;top:536.94px;font-size:12.0px;line-height:16px;color:#151515;">45,00 €</span>
<span style="left:27.00px;top:555.13px;font-size:12.9px;line-height:17px;color:#151515;letter-spacing:-0.518px;">Rate 1</span>
<span style="left:191.76px;top:555.94px;font-size:12.0px;line-height:16px;color:#151515;">20,00 €</span>
<span style="left:267.76px;top:555.94px;font-size:12.0px;line-height:16px;color:#151515;">20,00 €</span>
<span style="left:343.76px;top:555.94px;font-size:12.0px;line-height:16px;color:#151515;">20,00 €</span>
<span style="left:419.76px;top:555.94px;font-size:12.0px;line-height:16px;color:#151515;">20,00 €</span>
<span style="left:495.76px;top:555.94px;font-size:12.0px;line-height:16px;color:#151515;">20,00 €</span>
<span style="left:571.76px;top:555.94px;font-size:12.0px;line-height:16px;color:#151515;">20,00 €</span>
<span style="left:647.76px;top:555.94px;font-size:12.0px;line-height:16px;color:#151515;">20,00 €</span>
<span style="left:723.76px;top:555.94px;font-size:12.0px;line-height:16px;color:#151515;">20,00 €</span>
<span style="left:799.76px;top:555.94px;font-size:12.0px;line-height:16px;color:#151515;">20,00 €</span>
<span style="left:875.76px;top:555.94px;font-size:12.0px;line-height:16px;color:#151515;">20,00 €</span>
<span style="left:951.76px;top:555.94px;font-size:12.0px;line-height:16px;color:#151515;">20,00 €</span>
<span style="left:1027.76px;top:555.94px;font-size:12.0px;line-height:16px;color:#151515;">20,00 €</span>
<span style="left:27.00px;top:574.13px;font-size:12.9px;line-height:17px;color:#151515;letter-spacing:-0.468px;">Rate 2</span>
<span style="left:191.76px;top:574.94px;font-size:12.0px;line-height:16px;color:#151515;">35,00 €</span>
<span style="left:267.76px;top:574.94px;font-size:12.0px;line-height:16px;color:#151515;">35,00 €</span>
<span style="left:343.76px;top:574.94px;font-size:12.0px;line-height:16px;color:#151515;">35,00 €</span>
<span style="left:419.76px;top:574.94px;font-size:12.0px;line-height:16px;color:#151515;">35,00 €</span>
<span style="left:495.76px;top:574.94px;font-size:12.0px;line-height:16px;color:#151515;">35,00 €</span>
<span style="left:571.76px;top:574.94px;font-size:12.0px;line-height:16px;color:#151515;">35,00 €</span>
<span style="left:647.76px;top:574.94px;font-size:12.0px;line-height:16px;color:#151515;">35,00 €</span>
<span style="left:723.76px;top:574.94px;font-size:12.0px;line-height:16px;color:#151515;">35,00 €</span>
<span style="left:799.76px;top:574.94px;font-size:12.0px;line-height:16px;color:#151515;">35,00 €</span>
<span style="left:875.76px;top:574.94px;font-size:12.0px;line-height:16px;color:#151515;">35,00 €</span>
<span style="left:951.76px;top:574.94px;font-size:12.0px;line-height:16px;color:#151515;">35,00 €</span>
<span style="left:1027.76px;top:574.94px;font-size:12.0px;line-height:16px;color:#151515;">35,00 €</span>
<span style="left:27.00px;top:593.13px;font-size:12.9px;line-height:17px;color:#151515;letter-spacing:-0.468px;">Rate 3</span>
<span style="left:191.76px;top:593.94px;font-size:12.0px;line-height:16px;color:#151515;">45,00 €</span>
<span style="left:267.76px;top:593.94px;font-size:12.0px;line-height:16px;color:#151515;">45,00 €</span>
<span style="left:343.76px;top:593.94px;font-size:12.0px;line-height:16px;color:#151515;">45,00 €</span>
<span style="left:419.76px;top:593.94px;font-size:12.0px;line-height:16px;color:#151515;">45,00 €</span>
<span style="left:495.76px;top:593.94px;font-size:12.0px;line-height:16px;color:#151515;">45,00 €</span>
<span style="left:571.76px;top:593.94px;font-size:12.0px;line-height:16px;color:#151515;">45,00 €</span>
<span style="left:647.76px;top:593.94px;font-size:12.0px;line-height:16px;color:#151515;">45,00 €</span>
<span style="left:723.76px;top:593.94px;font-size:12.0px;line-height:16px;color:#151515;">45,00 €</span>
<span style="left:799.76px;top:593.94px;font-size:12.0px;line-height:16px;color:#151515;">45,00 €</span>
<span style="left:875.76px;top:593.94px;font-size:12.0px;line-height:16px;color:#151515;">45,00 €</span>
<span style="left:951.76px;top:593.94px;font-size:12.0px;line-height:16px;color:#151515;">45,00 €</span>
<span style="left:1027.76px;top:593.94px;font-size:12.0px;line-height:16px;color:#151515;">45,00 €</span>
<span style="left:27.00px;top:612.13px;font-size:12.9px;line-height:17px;color:#151515;letter-spacing:0.153px;">Kindergarten</span>
<span style="left:191.76px;top:612.94px;font-size:12.0px;line-height:16px;color:#151515;">35,00 €</span>
<span style="left:267.76px;top:612.94px;font-size:12.0px;line-height:16px;color:#151515;">35,00 €</span>
<span style="left:343.76px;top:612.94px;font-size:12.0px;line-height:16px;color:#151515;">35,00 €</span>
<span style="left:419.76px;top:612.94px;font-size:12.0px;line-height:16px;color:#151515;">35,00 €</span>
<span style="left:495.76px;top:612.94px;font-size:12.0px;line-height:16px;color:#151515;">35,00 €</span>
<span style="left:571.76px;top:612.94px;font-size:12.0px;line-height:16px;color:#151515;">35,00 €</span>
<span style="left:647.76px;top:612.94px;font-size:12.0px;line-height:16px;color:#151515;">35,00 €</span>
<span style="left:723.76px;top:612.94px;font-size:12.0px;line-height:16px;color:#151515;">35,00 €</span>
<span style="left:799.76px;top:612.94px;font-size:12.0px;line-height:16px;color:#151515;">35,00 €</span>
<span style="left:875.76px;top:612.94px;font-size:12.0px;line-height:16px;color:#151515;">35,00 €</span>
<span style="left:951.76px;top:612.94px;font-size:12.0px;line-height:16px;color:#151515;">35,00 €</span>
<span style="left:1027.76px;top:612.94px;font-size:12.0px;line-height:16px;color:#151515;">35,00 €</span>
<span style="left:27.00px;top:631.13px;font-size:12.9px;line-height:17px;color:#151515;letter-spacing:-0.038px;">Fahrkarten</span>
<span style="left:191.76px;top:631.94px;font-size:12.0px;line-height:16px;color:#151515;">70,00 €</span>
<span style="left:267.76px;top:631.94px;font-size:12.0px;line-height:16px;color:#151515;">70,00 €</span>
<span style="left:343.76px;top:631.94px;font-size:12.0px;line-height:16px;color:#151515;">70,00 €</span>
<span style="left:419.76px;top:631.94px;font-size:12.0px;line-height:16px;color:#151515;">70,00 €</span>
<span style="left:495.76px;top:631.94px;font-size:12.0px;line-height:16px;color:#151515;">70,00 €</span>
<span style="left:571.76px;top:631.94px;font-size:12.0px;line-height:16px;color:#151515;">70,00 €</span>
<span style="left:647.76px;top:631.94px;font-size:12.0px;line-height:16px;color:#151515;">70,00 €</span>
<span style="left:723.76px;top:631.94px;font-size:12.0px;line-height:16px;color:#151515;">70,00 €</span>
<span style="left:799.76px;top:631.94px;font-size:12.0px;line-height:16px;color:#151515;">70,00 €</span>
<span style="left:875.76px;top:631.94px;font-size:12.0px;line-height:16px;color:#151515;">70,00 €</span>
<span style="left:951.76px;top:631.94px;font-size:12.0px;line-height:16px;color:#151515;">70,00 €</span>
<span style="left:1027.76px;top:631.94px;font-size:12.0px;line-height:16px;color:#151515;">70,00 €</span>
<span style="left:27.00px;top:650.13px;font-size:12.9px;line-height:17px;color:#151515;letter-spacing:0.192px;">Zigaretten</span>
<span style="left:191.76px;top:650.94px;font-size:12.0px;line-height:16px;color:#151515;">50,00 €</span>
<span style="left:267.76px;top:650.94px;font-size:12.0px;line-height:16px;color:#151515;">50,00 €</span>
<span style="left:343.76px;top:650.94px;font-size:12.0px;line-height:16px;color:#151515;">50,00 €</span>
<span style="left:419.76px;top:650.94px;font-size:12.0px;line-height:16px;color:#151515;">50,00 €</span>
<span style="left:495.76px;top:650.94px;font-size:12.0px;line-height:16px;color:#151515;">50,00 €</span>
<span style="left:571.76px;top:650.94px;font-size:12.0px;line-height:16px;color:#151515;">50,00 €</span>
<span style="left:647.76px;top:650.94px;font-size:12.0px;line-height:16px;color:#151515;">50,00 €</span>
<span style="left:723.76px;top:650.94px;font-size:12.0px;line-height:16px;color:#151515;">50,00 €</span>
<span style="left:799.76px;top:650.94px;font-size:12.0px;line-height:16px;color:#151515;">50,00 €</span>
<span style="left:875.76px;top:650.94px;font-size:12.0px;line-height:16px;color:#151515;">50,00 €</span>
<span style="left:951.76px;top:650.94px;font-size:12.0px;line-height:16px;color:#151515;">50,00 €</span>
<span style="left:1027.76px;top:650.94px;font-size:12.0px;line-height:16px;color:#151515;">50,00 €</span>
<span style="left:27.00px;top:669.13px;font-size:12.9px;line-height:17px;color:#151515;letter-spacing:0.313px;">Alkohol</span>
<span style="left:198.44px;top:669.94px;font-size:12.0px;line-height:16px;color:#151515;">0,00 €</span>
<span style="left:274.44px;top:669.94px;font-size:12.0px;line-height:16px;color:#151515;">0,00 €</span>
<span style="left:350.44px;top:669.94px;font-size:12.0px;line-height:16px;color:#151515;">0,00 €</span>
<span style="left:426.44px;top:669.94px;font-size:12.0px;line-height:16px;color:#151515;">0,00 €</span>
<span style="left:502.44px;top:669.94px;font-size:12.0px;line-height:16px;color:#151515;">0,00 €</span>
<span style="left:578.44px;top:669.94px;font-size:12.0px;line-height:16px;color:#151515;">0,00 €</span>
<span style="left:654.44px;top:669.94px;font-size:12.0px;line-height:16px;color:#151515;">0,00 €</span>
<span style="left:730.44px;top:669.94px;font-size:12.0px;line-height:16px;color:#151515;">0,00 €</span>
<span style="left:806.44px;top:669.94px;font-size:12.0px;line-height:16px;color:#151515;">0,00 €</span>
<span style="left:882.44px;top:669.94px;font-size:12.0px;line-height:16px;color:#151515;">0,00 €</span>
<span style="left:958.44px;top:669.94px;font-size:12.0px;line-height:16px;color:#151515;">0,00 €</span>
<span style="left:1034.44px;top:669.94px;font-size:12.0px;line-height:16px;color:#151515;">0,00 €</span>
<span style="left:27.00px;top:688.13px;font-size:12.9px;line-height:17px;color:#151515;letter-spacing:0.305px;">Lebensmittel</span>
<span style="left:185.09px;top:688.94px;font-size:12.0px;line-height:16px;color:#151515;">400,00 €</span>
<span style="left:261.09px;top:688.94px;font-size:12.0px;line-height:16px;color:#151515;">400,00 €</span>
<span style="left:337.09px;top:688.94px;font-size:12.0px;line-height:16px;color:#151515;">400,00 €</span>
<span style="left:413.09px;top:688.94px;font-size:12.0px;line-height:16px;color:#151515;">400,00 €</span>
<span style="left:489.09px;top:688.94px;font-size:12.0px;line-height:16px;color:#151515;">400,00 €</span>
<span style="left:565.09px;top:688.94px;font-size:12.0px;line-height:16px;color:#151515;">400,00 €</span>
<span style="left:641.09px;top:688.94px;font-size:12.0px;line-height:16px;color:#151515;">400,00 €</span>
<span style="left:717.09px;top:688.94px;font-size:12.0px;line-height:16px;color:#151515;">400,00 €</span>
<span style="left:793.09px;top:688.94px;font-size:12.0px;line-height:16px;color:#151515;">400,00 €</span>
<span style="left:869.09px;top:688.94px;font-size:12.0px;line-height:16px;color:#151515;">400,00 €</span>
<span style="left:945.09px;top:688.94px;font-size:12.0px;line-height:16px;color:#151515;">400,00 €</span>
<span style="left:1021.09px;top:688.94px;font-size:12.0px;line-height:16px;color:#151515;">400,00 €</span>
<span style="left:27.00px;top:707.13px;font-size:12.9px;line-height:17px;color:#151515;letter-spacing:0.186px;">Kleidung</span>
<span style="left:191.76px;top:707.94px;font-size:12.0px;line-height:16px;color:#151515;">50,00 €</span>
<span style="left:267.76px;top:707.94px;font-size:12.0px;line-height:16px;color:#151515;">50,00 €</span>
<span style="left:343.76px;top:707.94px;font-size:12.0px;line-height:16px;color:#151515;">50,00 €</span>
<span style="left:419.76px;top:707.94px;font-size:12.0px;line-height:16px;color:#151515;">50,00 €</span>
<span style="left:495.76px;top:707.94px;font-size:12.0px;line-height:16px;color:#151515;">50,00 €</span>
<span style="left:571.76px;top:707.94px;font-size:12.0px;line-height:16px;color:#151515;">50,00 €</span>
<span style="left:647.76px;top:707.94px;font-size:12.0px;line-height:16px;color:#151515;">50,00 €</span>
<span style="left:723.76px;top:707.94px;font-size:12.0px;line-height:16px;color:#151515;">50,00 €</span>
<span style="left:799.76px;top:707.94px;font-size:12.0px;line-height:16px;color:#151515;">50,00 €</span>
<span style="left:875.76px;top:707.94px;font-size:12.0px;line-height:16px;color:#151515;">50,00 €</span>
<span style="left:951.76px;top:707.94px;font-size:12.0px;line-height:16px;color:#151515;">50,00 €</span>
<span style="left:1027.76px;top:707.94px;font-size:12.0px;line-height:16px;color:#151515;">50,00 €</span>
<span style="left:27.00px;top:726.13px;font-size:12.9px;line-height:17px;color:#151515;letter-spacing:-0.398px;">GEZ Gebühren</span>
<span style="left:191.76px;top:726.94px;font-size:12.0px;line-height:16px;color:#151515;">54,00 €</span>
<span style="left:267.76px;top:726.94px;font-size:12.0px;line-height:16px;color:#151515;">54,00 €</span>
<span style="left:343.76px;top:726.94px;font-size:12.0px;line-height:16px;color:#151515;">54,00 €</span>
<span style="left:419.76px;top:726.94px;font-size:12.0px;line-height:16px;color:#151515;">54,00 €</span>
<span style="left:495.76px;top:726.94px;font-size:12.0px;line-height:16px;color:#151515;">54,00 €</span>
<span style="left:571.76px;top:726.94px;font-size:12.0px;line-height:16px;color:#151515;">54,00 €</span>
<span style="left:647.76px;top:726.94px;font-size:12.0px;line-height:16px;color:#151515;">54,00 €</span>
<span style="left:723.76px;top:726.94px;font-size:12.0px;line-height:16px;color:#151515;">54,00 €</span>
<span style="left:799.76px;top:726.94px;font-size:12.0px;line-height:16px;color:#151515;">54,00 €</span>
<span style="left:875.76px;top:726.94px;font-size:12.0px;line-height:16px;color:#151515;">54,00 €</span>
<span style="left:951.76px;top:726.94px;font-size:12.0px;line-height:16px;color:#151515;">54,00 €</span>
<span style="left:1027.76px;top:726.94px;font-size:12.0px;line-height:16px;color:#151515;">54,00 €</span>
<span style="left:27.00px;top:745.13px;font-size:12.9px;line-height:17px;color:#151515;letter-spacing:-0.059px;">Handy Gebühr</span>
<span style="left:191.76px;top:745.94px;font-size:12.0px;line-height:16px;color:#151515;">29,00 €</span>
<span style="left:267.76px;top:745.94px;font-size:12.0px;line-height:16px;color:#151515;">29,00 €</span>
<span style="left:343.76px;top:745.94px;font-size:12.0px;line-height:16px;color:#151515;">29,00 €</span>
<span style="left:419.76px;top:745.94px;font-size:12.0px;line-height:16px;color:#151515;">29,00 €</span>
<span style="left:495.76px;top:745.94px;font-size:12.0px;line-height:16px;color:#151515;">29,00 €</span>
<span style="left:571.76px;top:745.94px;font-size:12.0px;line-height:16px;color:#151515;">29,00 €</span>
<span style="left:647.76px;top:745.94px;font-size:12.0px;line-height:16px;color:#151515;">29,00 €</span>
<span style="left:723.76px;top:745.94px;font-size:12.0px;line-height:16px;color:#151515;">29,00 €</span>
<span style="left:799.76px;top:745.94px;font-size:12.0px;line-height:16px;color:#151515;">29,00 €</span>
<span style="left:875.76px;top:745.94px;font-size:12.0px;line-height:16px;color:#151515;">29,00 €</span>
<span style="left:951.76px;top:745.94px;font-size:12.0px;line-height:16px;color:#151515;">29,00 €</span>
<span style="left:1027.76px;top:745.94px;font-size:12.0px;line-height:16px;color:#151515;">29,00 €</span>
<span style="left:27.00px;top:764.13px;font-size:12.9px;line-height:17px;color:#151515;letter-spacing:-0.117px;">Sonstiges</span>
<span style="left:198.44px;top:764.94px;font-size:12.0px;line-height:16px;color:#151515;">0,00 €</span>
<span style="left:274.44px;top:764.94px;font-size:12.0px;line-height:16px;color:#151515;">0,00 €</span>
<span style="left:350.44px;top:764.94px;font-size:12.0px;line-height:16px;color:#151515;">0,00 €</span>
<span style="left:426.44px;top:764.94px;font-size:12.0px;line-height:16px;color:#151515;">0,00 €</span>
<span style="left:502.44px;top:764.94px;font-size:12.0px;line-height:16px;color:#151515;">0,00 €</span>
<span style="left:578.44px;top:764.94px;font-size:12.0px;line-height:16px;color:#151515;">0,00 €</span>
<span style="left:654.44px;top:764.94px;font-size:12.0px;line-height:16px;color:#151515;">0,00 €</span>
<span style="left:730.44px;top:764.94px;font-size:12.0px;line-height:16px;color:#151515;">0,00 €</span>
<span style="left:806.44px;top:764.94px;font-size:12.0px;line-height:16px;color:#151515;">0,00 €</span>
<span style="left:882.44px;top:764.94px;font-size:12.0px;line-height:16px;color:#151515;">0,00 €</span>
<span style="left:958.44px;top:764.94px;font-size:12.0px;line-height:16px;color:#151515;">0,00 €</span>
<span style="left:1034.44px;top:764.94px;font-size:12.0px;line-height:16px;color:#151515;">0,00 €</span>
<div style="left:25px;top:458px;width:1045px;height:1px;background:#2b2b2b"></div>
<div style="left:25px;top:477px;width:1045px;height:1px;background:#2b2b2b"></div>
<div style="left:25px;top:496px;width:1045px;height:1px;background:#2b2b2b"></div>
<div style="left:25px;top:515px;width:1045px;height:1px;background:#2b2b2b"></div>
<div style="left:25px;top:534px;width:1045px;height:1px;background:#2b2b2b"></div>
<div style="left:25px;top:553px;width:1045px;height:1px;background:#2b2b2b"></div>
<div style="left:25px;top:572px;width:1045px;height:1px;background:#2b2b2b"></div>
<div style="left:25px;top:591px;width:1045px;height:1px;background:#2b2b2b"></div>
<div style="left:25px;top:610px;width:1045px;height:1px;background:#2b2b2b"></div>
<div style="left:25px;top:629px;width:1045px;height:1px;background:#2b2b2b"></div>
<div style="left:25px;top:648px;width:1045px;height:1px;background:#2b2b2b"></div>
<div style="left:25px;top:667px;width:1045px;height:1px;background:#2b2b2b"></div>
<div style="left:25px;top:686px;width:1045px;height:1px;background:#2b2b2b"></div>
<div style="left:25px;top:705px;width:1045px;height:1px;background:#2b2b2b"></div>
<div style="left:25px;top:724px;width:1045px;height:1px;background:#2b2b2b"></div>
<div style="left:25px;top:743px;width:1045px;height:1px;background:#2b2b2b"></div>
<div style="left:25px;top:762px;width:1045px;height:1px;background:#2b2b2b"></div>
<div style="left:158px;top:439px;width:1px;height:342px;background:#1f1f1f"></div>
<div style="left:157px;top:439px;width:1px;height:342px;background:rgba(0,0,0,.3)"></div>
<div style="left:234px;top:439px;width:1px;height:342px;background:#1f1f1f"></div>
<div style="left:233px;top:439px;width:1px;height:342px;background:rgba(0,0,0,.3)"></div>
<div style="left:310px;top:439px;width:1px;height:342px;background:#1f1f1f"></div>
<div style="left:309px;top:439px;width:1px;height:342px;background:rgba(0,0,0,.3)"></div>
<div style="left:386px;top:439px;width:1px;height:342px;background:#1f1f1f"></div>
<div style="left:385px;top:439px;width:1px;height:342px;background:rgba(0,0,0,.3)"></div>
<div style="left:462px;top:439px;width:1px;height:342px;background:#1f1f1f"></div>
<div style="left:461px;top:439px;width:1px;height:342px;background:rgba(0,0,0,.3)"></div>
<div style="left:538px;top:439px;width:1px;height:342px;background:#1f1f1f"></div>
<div style="left:537px;top:439px;width:1px;height:342px;background:rgba(0,0,0,.3)"></div>
<div style="left:614px;top:439px;width:1px;height:342px;background:#1f1f1f"></div>
<div style="left:613px;top:439px;width:1px;height:342px;background:rgba(0,0,0,.3)"></div>
<div style="left:690px;top:439px;width:1px;height:342px;background:#1f1f1f"></div>
<div style="left:689px;top:439px;width:1px;height:342px;background:rgba(0,0,0,.3)"></div>
<div style="left:766px;top:439px;width:1px;height:342px;background:#1f1f1f"></div>
<div style="left:765px;top:439px;width:1px;height:342px;background:rgba(0,0,0,.3)"></div>
<div style="left:842px;top:439px;width:1px;height:342px;background:#1f1f1f"></div>
<div style="left:841px;top:439px;width:1px;height:342px;background:rgba(0,0,0,.3)"></div>
<div style="left:918px;top:439px;width:1px;height:342px;background:#1f1f1f"></div>
<div style="left:917px;top:439px;width:1px;height:342px;background:rgba(0,0,0,.3)"></div>
<div style="left:994px;top:439px;width:1px;height:342px;background:#1f1f1f"></div>
<div style="left:993px;top:439px;width:1px;height:342px;background:rgba(0,0,0,.3)"></div>
<div style="left:1069px;top:439px;width:2px;height:342px;background:linear-gradient(to right,rgba(13,13,13,.6) 0,rgba(13,13,13,.6) 1px,#0d0d0d 1px)"></div>
<div style="left:25px;top:781px;width:1046px;height:22px;background:#0d0d0d"></div>
<div style="left:25px;top:783px;width:1044px;height:18px;background:#a0944b"></div>
<span style="left:27.00px;top:783.83px;font-size:12.9px;line-height:17px;color:#1a1708;letter-spacing:-0.189px;">Summe</span>
<div style="left:158px;top:783px;width:1px;height:18px;background:#2a2610"></div>
<svg style="left:159px;top:783px" width="5" height="5"><path d="M0 0h4.500L0 4.500z" fill="#2f6a2f"/></svg>
<span style="left:175.08px;top:784.64px;font-size:12.0px;line-height:16px;color:#1a1708;">1.692,00 €</span>
<div style="left:234px;top:783px;width:1px;height:18px;background:#2a2610"></div>
<svg style="left:235px;top:783px" width="5" height="5"><path d="M0 0h4.500L0 4.500z" fill="#2f6a2f"/></svg>
<span style="left:251.08px;top:784.64px;font-size:12.0px;line-height:16px;color:#1a1708;">1.662,00 €</span>
<div style="left:310px;top:783px;width:1px;height:18px;background:#2a2610"></div>
<svg style="left:311px;top:783px" width="5" height="5"><path d="M0 0h4.500L0 4.500z" fill="#2f6a2f"/></svg>
<span style="left:327.08px;top:784.64px;font-size:12.0px;line-height:16px;color:#1a1708;">1.692,00 €</span>
<div style="left:386px;top:783px;width:1px;height:18px;background:#2a2610"></div>
<svg style="left:387px;top:783px" width="5" height="5"><path d="M0 0h4.500L0 4.500z" fill="#2f6a2f"/></svg>
<span style="left:403.08px;top:784.64px;font-size:12.0px;line-height:16px;color:#1a1708;">1.692,00 €</span>
<div style="left:462px;top:783px;width:1px;height:18px;background:#2a2610"></div>
<svg style="left:463px;top:783px" width="5" height="5"><path d="M0 0h4.500L0 4.500z" fill="#2f6a2f"/></svg>
<span style="left:479.08px;top:784.64px;font-size:12.0px;line-height:16px;color:#1a1708;">1.692,00 €</span>
<div style="left:538px;top:783px;width:1px;height:18px;background:#2a2610"></div>
<svg style="left:539px;top:783px" width="5" height="5"><path d="M0 0h4.500L0 4.500z" fill="#2f6a2f"/></svg>
<span style="left:555.08px;top:784.64px;font-size:12.0px;line-height:16px;color:#1a1708;">1.692,00 €</span>
<div style="left:614px;top:783px;width:1px;height:18px;background:#2a2610"></div>
<svg style="left:615px;top:783px" width="5" height="5"><path d="M0 0h4.500L0 4.500z" fill="#2f6a2f"/></svg>
<span style="left:631.08px;top:784.64px;font-size:12.0px;line-height:16px;color:#1a1708;">1.692,00 €</span>
<div style="left:690px;top:783px;width:1px;height:18px;background:#2a2610"></div>
<svg style="left:691px;top:783px" width="5" height="5"><path d="M0 0h4.500L0 4.500z" fill="#2f6a2f"/></svg>
<span style="left:707.08px;top:784.64px;font-size:12.0px;line-height:16px;color:#1a1708;">1.692,00 €</span>
<div style="left:766px;top:783px;width:1px;height:18px;background:#2a2610"></div>
<svg style="left:767px;top:783px" width="5" height="5"><path d="M0 0h4.500L0 4.500z" fill="#2f6a2f"/></svg>
<span style="left:783.08px;top:784.64px;font-size:12.0px;line-height:16px;color:#1a1708;">1.692,00 €</span>
<div style="left:842px;top:783px;width:1px;height:18px;background:#2a2610"></div>
<svg style="left:843px;top:783px" width="5" height="5"><path d="M0 0h4.500L0 4.500z" fill="#2f6a2f"/></svg>
<span style="left:859.08px;top:784.64px;font-size:12.0px;line-height:16px;color:#1a1708;">1.692,00 €</span>
<div style="left:918px;top:783px;width:1px;height:18px;background:#2a2610"></div>
<svg style="left:919px;top:783px" width="5" height="5"><path d="M0 0h4.500L0 4.500z" fill="#2f6a2f"/></svg>
<span style="left:935.08px;top:784.64px;font-size:12.0px;line-height:16px;color:#1a1708;">1.692,00 €</span>
<div style="left:994px;top:783px;width:1px;height:18px;background:#2a2610"></div>
<svg style="left:995px;top:783px" width="5" height="5"><path d="M0 0h4.500L0 4.500z" fill="#2f6a2f"/></svg>
<span style="left:1011.08px;top:784.64px;font-size:12.0px;line-height:16px;color:#1a1708;">1.692,00 €</span>
<div style="left:25px;top:821px;width:1046px;height:21px;background:#0d0d0d"></div>
<div style="left:25px;top:823px;width:1044px;height:17px;background:#f4f4f4"></div>
<div style="left:157px;top:823px;width:2px;height:17px;background:#0d0d0d"></div>
<div style="left:234px;top:823px;width:1px;height:17px;background:#1f1f1f"></div>
<div style="left:233px;top:823px;width:1px;height:17px;background:rgba(0,0,0,.3)"></div>
<div style="left:310px;top:823px;width:1px;height:17px;background:#1f1f1f"></div>
<div style="left:309px;top:823px;width:1px;height:17px;background:rgba(0,0,0,.3)"></div>
<div style="left:386px;top:823px;width:1px;height:17px;background:#1f1f1f"></div>
<div style="left:385px;top:823px;width:1px;height:17px;background:rgba(0,0,0,.3)"></div>
<div style="left:462px;top:823px;width:1px;height:17px;background:#1f1f1f"></div>
<div style="left:461px;top:823px;width:1px;height:17px;background:rgba(0,0,0,.3)"></div>
<div style="left:538px;top:823px;width:1px;height:17px;background:#1f1f1f"></div>
<div style="left:537px;top:823px;width:1px;height:17px;background:rgba(0,0,0,.3)"></div>
<div style="left:614px;top:823px;width:1px;height:17px;background:#1f1f1f"></div>
<div style="left:613px;top:823px;width:1px;height:17px;background:rgba(0,0,0,.3)"></div>
<div style="left:690px;top:823px;width:1px;height:17px;background:#1f1f1f"></div>
<div style="left:689px;top:823px;width:1px;height:17px;background:rgba(0,0,0,.3)"></div>
<div style="left:766px;top:823px;width:1px;height:17px;background:#1f1f1f"></div>
<div style="left:765px;top:823px;width:1px;height:17px;background:rgba(0,0,0,.3)"></div>
<div style="left:842px;top:823px;width:1px;height:17px;background:#1f1f1f"></div>
<div style="left:841px;top:823px;width:1px;height:17px;background:rgba(0,0,0,.3)"></div>
<div style="left:918px;top:823px;width:1px;height:17px;background:#1f1f1f"></div>
<div style="left:917px;top:823px;width:1px;height:17px;background:rgba(0,0,0,.3)"></div>
<div style="left:994px;top:823px;width:1px;height:17px;background:#1f1f1f"></div>
<div style="left:993px;top:823px;width:1px;height:17px;background:rgba(0,0,0,.3)"></div>
<span style="left:27.00px;top:823.83px;font-size:12.9px;line-height:17px;color:#151515;letter-spacing:0.075px;">Überschuss / Verlust</span>
<span style="left:185.09px;top:824.64px;font-size:12.0px;line-height:16px;color:#151515;">826,00 €</span>
<span style="left:261.09px;top:824.64px;font-size:12.0px;line-height:16px;color:#151515;">766,00 €</span>
<span style="left:337.09px;top:824.64px;font-size:12.0px;line-height:16px;color:#151515;">826,00 €</span>
<span style="left:413.09px;top:824.64px;font-size:12.0px;line-height:16px;color:#151515;">736,00 €</span>
<span style="left:489.09px;top:824.64px;font-size:12.0px;line-height:16px;color:#151515;">826,00 €</span>
<span style="left:565.09px;top:824.64px;font-size:12.0px;line-height:16px;color:#151515;">826,00 €</span>
<span style="left:641.09px;top:824.64px;font-size:12.0px;line-height:16px;color:#151515;">736,00 €</span>
<span style="left:717.09px;top:824.64px;font-size:12.0px;line-height:16px;color:#151515;">810,00 €</span>
<span style="left:793.09px;top:824.64px;font-size:12.0px;line-height:16px;color:#151515;">810,00 €</span>
<span style="left:869.09px;top:824.64px;font-size:12.0px;line-height:16px;color:#151515;">856,00 €</span>
<span style="left:945.09px;top:824.64px;font-size:12.0px;line-height:16px;color:#151515;">736,00 €</span>
<span style="left:1021.09px;top:824.64px;font-size:12.0px;line-height:16px;color:#151515;">826,00 €</span>
<div style="left:1147px;top:243px;width:230px;height:234px;background:linear-gradient(#f6f6f6 0,#f5f5f5 48%,#e6e6e6 75%,#d6d6d6 100%);border:1px solid #333;box-shadow:0 1px 1px rgba(0,0,0,.3)"></div>
<span style="left:1156.50px;top:247.06px;font-size:12.8px;line-height:17px;color:#1c1c1c;letter-spacing:0.055px;">Haushaltsbuch:</span>
<span style="left:1156.50px;top:281.56px;font-size:12.8px;line-height:17px;color:#1c1c1c;letter-spacing:-0.064px;">Die Daten Können Sie beliebig</span>
<span style="left:1156.50px;top:298.56px;font-size:12.8px;line-height:17px;color:#1c1c1c;letter-spacing:0.287px;">Ändern</span>
<span style="left:1157.00px;top:323.06px;font-size:12.8px;line-height:17px;color:#1c1c1c;letter-spacing:0.011px;">Spalten können sie nach belieben</span>
<span style="left:1157.00px;top:340.56px;font-size:12.8px;line-height:17px;color:#1c1c1c;letter-spacing:0.650px;">erweitern</span>
<div style="left:1578px;top:154px;width:14px;height:770px;background:#f2f2f2"></div>
<div style="left:1577px;top:174px;width:1px;height:750px;background:#e3e3e3"></div>
<svg style="left:1580px;top:161px" width="10" height="6"><path d="M.5 5l4.500-4.500 4.500 4.500z" fill="#3c3c3c"/></svg>
<div style="left:1578px;top:154px;width:14px;height:1px;background:#b4b4b4"></div>
<div style="left:1578px;top:171px;width:13px;height:717px;background:linear-gradient(to right,#fbfbfb,#f4f4f4);border:1px solid #858585;border-radius:1px"></div>
<div style="left:1580px;top:526px;width:9px;height:1px;background:#8d9198"></div>
<div style="left:1580px;top:528px;width:9px;height:1px;background:#8d9198"></div>
<div style="left:1580px;top:530px;width:9px;height:1px;background:#8d9198"></div>
<div style="left:1580px;top:532px;width:9px;height:1px;background:#8d9198"></div>
<svg style="left:1580px;top:912px" width="10" height="6"><path d="M.5 .5l4.500 4.500 4.500-4.500z" fill="#3c3c3c"/></svg>
<div style="left:3px;top:920px;width:1589px;height:19px;background:#efefef"></div>
<div style="left:3px;top:923px;width:1589px;height:1px;background:#e2e2e2"></div>
<div style="left:3px;top:938px;width:1589px;height:1px;background:#bdbdbd"></div>
<svg style="left:4px;top:924px" width="56" height="14" viewBox="0 0 56 14"><g fill="#4a4a4a">
<rect x="1.600" y="3.200" width="1.200" height="7"/><path d="M7 3.200v7l-3.800-3.500z"/>
<path d="M21 3.200v7l-3.900-3.500z"/>
<path d="M30 3.200v7l3.900-3.500z"/>
<path d="M43.200 3.200v7l3.800-3.500z"/><rect x="47.600" y="3.200" width="1.200" height="7"/></g></svg>
<svg style="left:58px;top:923px" width="240" height="16" viewBox="0 0 240 16">
<path d="M0 15.500L0 1.500" stroke="#cfcfcf"/>
<path d="M1 .5h57l9 14.500H4z" fill="#f7f7f7" stroke="#cfcfcf"/>
<path d="M62 14.500l9-14h54l-9 14" fill="none" stroke="#d2d2d2"/>
<path d="M124 14.500l9-14h54l-9 14" fill="none" stroke="#d2d2d2"/>
<path d="M186 14.500l9-14h38l-9 14" fill="none" stroke="#d6d6d6"/>
<path d="M203.500 4.500h9v7h-9z" fill="#f6f9ff" stroke="#7f98c2"/><path d="M202.500 2l1 1.800 2 .3-1.500 1.300.4 2-1.900-1-1.900 1 .4-2L199.500 4l2-.3z" fill="#f2d95a" stroke="#cfae2a" stroke-width=".5"/>
</svg>
<span style="left:69.50px;top:923.25px;font-size:11.4px;line-height:16px;font-weight:bold;color:#3c3c3c;letter-spacing:0.053px;">Tabelle1</span>
<span style="left:134.40px;top:923.82px;font-size:11.2px;line-height:15px;color:#444;letter-spacing:-0.003px;">Tabelle2</span>
<span style="left:196.40px;top:923.82px;font-size:11.2px;line-height:15px;color:#444;letter-spacing:0.072px;">Tabelle3</span>
<div style="left:946px;top:923px;width:8px;height:16px;background:#f6f6f6;border:1px solid #9a9a9a"></div>
<div style="left:949px;top:927px;width:1px;height:8px;background:#8a8a8a"></div>
<svg style="left:957px;top:926px" width="8" height="10"><path d="M7 .5v9L1.500 5z" fill="#3c3c3c"/></svg>
<div style="left:971px;top:924px;width:560px;height:14px;background:linear-gradient(#f6f6f6,#f0f0f0);border:1px solid #a9a9a9;border-radius:1px"></div>
<div style="left:1245.0px;top:928px;width:1px;height:6px;background:#9a9a9a"></div>
<div style="left:1247.5px;top:928px;width:1px;height:6px;background:#9a9a9a"></div>
<div style="left:1250.0px;top:928px;width:1px;height:6px;background:#9a9a9a"></div>
<div style="left:1252.5px;top:928px;width:1px;height:6px;background:#9a9a9a"></div>
<svg style="left:1565px;top:926px" width="8" height="10"><path d="M1 .5v9L6.500 5z" fill="#3c3c3c"/></svg>
<div style="left:1576px;top:924px;width:1px;height:14px;background:#dadada"></div>
<div style="left:3px;top:939px;width:1589px;height:20px;background:linear-gradient(#e6e8ec 0,#f1f2f5 20%,#fbfbfc 45%,#f1f2f5 60%,#dfe2e8 85%,#cdd0d7 100%)"></div>
<span style="left:7.90px;top:941.83px;font-size:10.6px;line-height:15px;color:#333;letter-spacing:0.018px;">Bereit</span>
<div style="left:45px;top:942px;width:1px;height:14px;background:#cfcfcf"></div>
<div style="left:46px;top:942px;width:1px;height:14px;background:#fff"></div>
<svg style="left:53px;top:942px" width="17" height="14" viewBox="0 0 17 14"><rect x=".5" y=".5" width="15" height="12" fill="#f4f8ff" stroke="#5f7fb8"/><rect x="1.500" y="1.500" width="5" height="4" fill="#d8402f"/><path d="M8 3.500h6M3 7.500h11M3 10.500h11" stroke="#7f98c8"/></svg>
<div style="left:78px;top:942px;width:1px;height:14px;background:#cfcfcf"></div>
<div style="left:79px;top:942px;width:1px;height:14px;background:#fff"></div>
<div style="left:1364px;top:941px;width:1px;height:16px;background:#c9c9c9"></div>
<div style="left:1365px;top:941px;width:1px;height:16px;background:#fff"></div>
<div style="left:1367px;top:940px;width:19px;height:18px;background:linear-gradient(#fbf1a8,#f4df5e);border:1px solid #e8cf55;border-radius:2px"></div>
<svg style="left:1370px;top:943px" width="60" height="13" viewBox="0 0 60 13">
<rect x=".5" y=".5" width="12" height="11" fill="#fff" stroke="#555"/><path d="M1 4.500h11M1 8.500h11M4.500 1v10M8.500 1v10" stroke="#666" stroke-width=".9"/>
<rect x="18.500" y=".5" width="12" height="11" fill="#f3f3f3" stroke="#555"/><rect x="21.500" y="2.500" width="7" height="7" fill="#fff" stroke="#777"/>
<rect x="36.500" y=".5" width="12" height="11" fill="#e4e4e4" stroke="#555"/><path d="M37 1h11v5H37z" fill="#fff"/><path d="M40.500 1v5M44.500 1v5M37 6.500h11" stroke="#666" stroke-width=".9"/>
</svg>
<span style="left:1431.00px;top:943.07px;font-size:10.2px;line-height:14px;color:#2a2a2a;letter-spacing:-0.264px;">100 %</span>
<svg style="left:1465px;top:940px" width="128" height="18" viewBox="0 0 128 18">
<path d="M17 9.500h96" stroke="#9a9a9a"/><path d="M17 10.500h96" stroke="#fff"/>
<circle cx="9.300" cy="9" r="7" fill="#f6f6f6" stroke="#9b9b9b"/><rect x="5.500" y="8.200" width="7.600" height="1.700" fill="#444"/>
<circle cx="119.600" cy="9" r="7" fill="#f6f6f6" stroke="#9b9b9b"/><rect x="115.800" y="8.200" width="7.600" height="1.700" fill="#333"/><rect x="118.750" y="5.200" width="1.700" height="7.600" fill="#333"/>
<path d="M61.500 2.500h7v8l-3.500 4-3.500-4z" fill="#f2f2f2" stroke="#8a8a8a"/>
</svg>
<div style="left:0px;top:958px;width:1596px;height:1px;background:#9a9a9a"></div>
<div style="left:0px;top:959px;width:1596px;height:6px;background:linear-gradient(to right,#2e241b 0,#33281e 7%,#4e4238 9%,#55483d 40%,#5c4f44 45%,#62554a 100%)"></div>
<div style="left:0px;top:962px;width:1596px;height:3px;background:linear-gradient(rgba(160,120,90,0),rgba(165,125,90,.5))"></div>
<div style="left:0px;top:965px;width:1596px;height:2px;background:linear-gradient(#d9a678,#efc49a)"></div>
<div style="left:116px;top:960px;width:55px;height:7px;background:linear-gradient(#fbf3e4,#ead9be 50%,#c9b08c);border-radius:3px 3px 0 0;border:1px solid #85735c;border-bottom:0"></div>
<div style="left:175px;top:960px;width:55px;height:7px;background:linear-gradient(#fbf3e4,#ead9be 50%,#c9b08c);border-radius:3px 3px 0 0;border:1px solid #85735c;border-bottom:0"></div>
<div style="left:411px;top:960px;width:56px;height:7px;background:linear-gradient(#fbf3e4,#ead9be 50%,#c9b08c);border-radius:3px 3px 0 0;border:1px solid #85735c;border-bottom:0"></div>
<div style="left:469px;top:960px;width:55px;height:7px;background:linear-gradient(#fbf3e4,#ead9be 50%,#c9b08c);border-radius:3px 3px 0 0;border:1px solid #85735c;border-bottom:0"></div>
<div style="left:528px;top:960px;width:56px;height:7px;background:linear-gradient(#fbf3e4,#ead9be 50%,#c9b08c);border-radius:3px 3px 0 0;border:1px solid #85735c;border-bottom:0"></div>
<div style="left:587px;top:960px;width:56px;height:7px;background:linear-gradient(#fbf3e4,#ead9be 50%,#c9b08c);border-radius:3px 3px 0 0;border:1px solid #85735c;border-bottom:0"></div>
<div style="left:600px;top:964px;width:30px;height:2px;background:repeating-linear-gradient(to right,#d04030 0,#d04030 3px,transparent 3px,transparent 5px)"></div>
<div style="left:12px;top:961px;width:22px;height:4px;background:radial-gradient(ellipse at 50% 100%,#fff 0,#f4d8b0 55%,rgba(200,150,100,0) 100%)"></div>
<div style="left:0px;top:0px;width:1596px;height:3px;background:linear-gradient(#f2c596 0,#f2c596 1px,#a96c36 1px,#a96c36 2.500px,#c89868 3px)"></div>
<div style="left:0px;top:0px;width:3px;height:967px;background:linear-gradient(to right,#f4c79c 0,#f4c79c 1px,#a56d3a 1px,#9f6a38 100%)"></div>
<div style="left:1591px;top:3px;width:1px;height:956px;background:#fbe6d6"></div>
<div style="left:1592px;top:0px;width:3px;height:967px;background:linear-gradient(to right,#b4835a 0,#94602f 50%,#8a5528 100%)"></div>
<div style="left:1592px;top:3px;width:3px;height:30px;background:linear-gradient(#7a6838,rgba(122,104,56,0))"></div>
<div style="left:1595px;top:0px;width:1px;height:967px;background:#f5c08c"></div>
<div style="left:0px;top:0px;width:1596px;height:1px;background:#f2c596"></div>
</div>
</body></html>
